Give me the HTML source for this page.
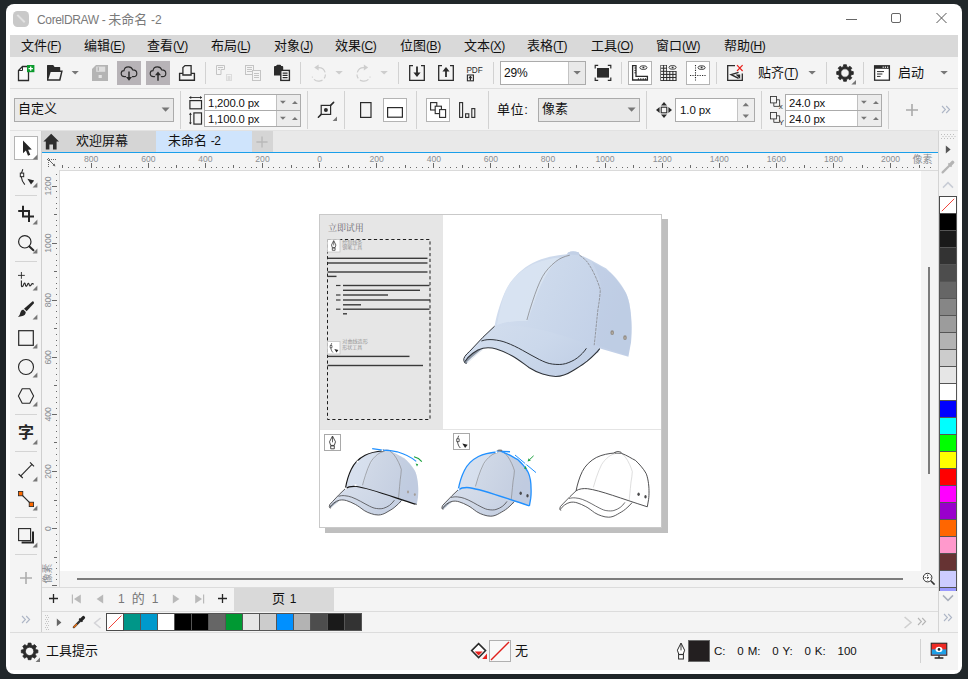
<!DOCTYPE html>
<html lang="zh-CN"><head><meta charset="utf-8"><title>CorelDRAW - 未命名 -2</title>
<style>
html,body{margin:0;padding:0;}
body{width:968px;height:679px;background:#21272a;overflow:hidden;position:relative;font-family:"Liberation Sans","Noto Sans CJK SC",sans-serif;font-size:13px;}
#app{position:absolute;left:0;top:0;width:968px;height:679px;background:#fff;clip-path:inset(4px 6px 5px 6px round 8px);}
#app div,#app span.t,#app svg{position:absolute;}
#app div{box-sizing:border-box;}
span.t{white-space:pre;}
u{text-decoration:underline;text-underline-offset:1.5px;text-decoration-thickness:1px;}
.lat{font-size:12px;letter-spacing:-0.45px;}
</style></head><body><div id="app">

<svg style="left:13px;top:11px;" width="16" height="16" viewBox="0 0 16 16"><rect x="0" y="0" width="16" height="16" rx="4.5" fill="#c9c9c9"/><path d="M3.6 4.6 L5 3.2 L12.4 10.6 L11 12 Z" fill="#e2e2e2"/></svg>
<span class="t" style="left:37px;top:11.5px;font-size:13px;line-height:16px;color:#7a7a7a;"><span style="font-size:12px;letter-spacing:-0.35px">CorelDRAW - </span>未命名 <span style="font-size:12px">-2</span></span>
<svg style="left:840px;top:8px;" width="116" height="22" viewBox="0 0 116 22"><path d="M6 11.5 H17" stroke="#666" stroke-width="1" fill="none"/><rect x="51.5" y="5.5" width="9" height="9" rx="1.5" fill="none" stroke="#666" stroke-width="1"/><path d="M96.5 5 L106.5 15 M106.5 5 L96.5 15" stroke="#555" stroke-width="1" fill="none"/></svg>
<div style="left:10px;top:35px;width:948px;height:22px;background:#d9d9d9;"></div>
<span class="t" style="left:21px;top:38px;font-size:13px;line-height:16px;color:#111;">文件<span class="lat">(<u>F</u>)</span></span>
<span class="t" style="left:84px;top:38px;font-size:13px;line-height:16px;color:#111;">编辑<span class="lat">(<u>E</u>)</span></span>
<span class="t" style="left:147px;top:38px;font-size:13px;line-height:16px;color:#111;">查看<span class="lat">(<u>V</u>)</span></span>
<span class="t" style="left:211px;top:38px;font-size:13px;line-height:16px;color:#111;">布局<span class="lat">(<u>L</u>)</span></span>
<span class="t" style="left:274px;top:38px;font-size:13px;line-height:16px;color:#111;">对象<span class="lat">(<u>J</u>)</span></span>
<span class="t" style="left:335px;top:38px;font-size:13px;line-height:16px;color:#111;">效果<span class="lat">(<u>C</u>)</span></span>
<span class="t" style="left:400px;top:38px;font-size:13px;line-height:16px;color:#111;">位图<span class="lat">(<u>B</u>)</span></span>
<span class="t" style="left:464px;top:38px;font-size:13px;line-height:16px;color:#111;">文本<span class="lat">(<u>X</u>)</span></span>
<span class="t" style="left:527px;top:38px;font-size:13px;line-height:16px;color:#111;">表格<span class="lat">(<u>T</u>)</span></span>
<span class="t" style="left:591px;top:38px;font-size:13px;line-height:16px;color:#111;">工具<span class="lat">(<u>O</u>)</span></span>
<span class="t" style="left:656px;top:38px;font-size:13px;line-height:16px;color:#111;">窗口<span class="lat">(<u>W</u>)</span></span>
<span class="t" style="left:724px;top:38px;font-size:13px;line-height:16px;color:#111;">帮助<span class="lat">(<u>H</u>)</span></span>
<div style="left:10px;top:57px;width:948px;height:31px;background:#f4f4f4;"></div>
<div style="left:10px;top:88px;width:948px;height:1px;background:#dedede;"></div>
<div style="left:10px;top:89px;width:948px;height:42px;background:#f4f4f4;"></div>
<div style="left:10px;top:130px;width:948px;height:1px;background:#e2e2e2;"></div>
<div style="left:205px;top:62px;width:1px;height:22px;background:#d2d2d2;"></div>
<div style="left:300px;top:62px;width:1px;height:22px;background:#d2d2d2;"></div>
<div style="left:398px;top:62px;width:1px;height:22px;background:#d2d2d2;"></div>
<div style="left:493px;top:62px;width:1px;height:22px;background:#d2d2d2;"></div>
<div style="left:621px;top:62px;width:1px;height:22px;background:#d2d2d2;"></div>
<div style="left:716px;top:62px;width:1px;height:22px;background:#d2d2d2;"></div>
<div style="left:826px;top:62px;width:1px;height:22px;background:#d2d2d2;"></div>
<div style="left:863px;top:62px;width:1px;height:22px;background:#d2d2d2;"></div>
<svg style="left:16px;top:63px;" width="20" height="20" viewBox="0 0 20 20"><path d="M2.5 17.5 V7.5 L6.5 3.5 H12.5 V17.5 Z" fill="#fafafa" stroke="#2b2b2b" stroke-width="1.3" stroke-linejoin="miter"/><path d="M6.5 3.5 V7.5 H2.5" fill="none" stroke="#2b2b2b" stroke-width="1"/><rect x="11" y="2" width="7.4" height="7.2" fill="#0a9a2c"/><path d="M14.7 3.4 V7.8 M12.5 5.6 H16.9" stroke="#fff" stroke-width="1.3"/></svg>
<svg style="left:45px;top:63px;" width="20" height="20" viewBox="0 0 20 20"><path d="M2 17.8 V2.6 Q2 2 2.6 2 H8.2 L9.6 4 H14.6 Q15.2 4 15.2 4.6 V7.4 H17.8 L15.4 17.8 Z" fill="#2b2b2b"/><path d="M3.4 16.3 L5.7 8.9 H16 L14.2 16.3 Z" fill="#f4f4f4"/></svg>
<svg style="left:71px;top:70px;" width="9" height="6" viewBox="0 0 9 6"><path d="M0.6 0.9 H7.8 L4.2 4.6 Z" fill="#777"/></svg>
<svg style="left:91px;top:64px;" width="18" height="18" viewBox="0 0 18 18"><path d="M1 5 L5 1 H17 V17 H1 Z" fill="#b4b4b4"/><rect x="5.2" y="2.6" width="9" height="5.2" fill="#dedede"/><rect x="6.6" y="3.2" width="1.4" height="3.6" fill="#b4b4b4"/><rect x="7.6" y="11" width="3.2" height="3" fill="#e4e4e4"/></svg>
<div style="left:117px;top:61px;width:24px;height:24px;background:#b7b3b7;"></div>
<div style="left:146px;top:61px;width:24px;height:24px;background:#b7b3b7;"></div>
<svg style="left:118px;top:62px;" width="22" height="22" viewBox="0 0 22 22"><path d="M7.6 14.6 H6.6 C4.4 14.6 3.2 13 3.2 11.5 C3.2 9.8 4.5 8.6 6 8.6 C6.3 6.2 8.2 4.8 10.4 4.8 C12.5 4.8 14.1 6 14.7 7.8 C16.9 7.8 18.8 9.2 18.8 11.4 C18.8 13.3 17.3 14.6 15.5 14.6 H14.4" fill="none" stroke="#2b2b2b" stroke-width="1.15" stroke-linecap="round"/><path d="M11 9.6 V16.4" stroke="#2b2b2b" stroke-width="1.5"/><path d="M8 15 H14 L11 18.8 Z" fill="#2b2b2b"/></svg>
<svg style="left:147px;top:62px;" width="22" height="22" viewBox="0 0 22 22"><path d="M7.6 14.6 H6.6 C4.4 14.6 3.2 13 3.2 11.5 C3.2 9.8 4.5 8.6 6 8.6 C6.3 6.2 8.2 4.8 10.4 4.8 C12.5 4.8 14.1 6 14.7 7.8 C16.9 7.8 18.8 9.2 18.8 11.4 C18.8 13.3 17.3 14.6 15.5 14.6 H14.4" fill="none" stroke="#2b2b2b" stroke-width="1.15" stroke-linecap="round"/><path d="M11 12 V18.8" stroke="#2b2b2b" stroke-width="1.5"/><path d="M8 13.2 H14 L11 9.4 Z" fill="#2b2b2b"/></svg>
<svg style="left:177px;top:63px;" width="20" height="20" viewBox="0 0 20 20"><path d="M5.9 12 V4.6 L8 2.6 H14.1 V12 Z" fill="none" stroke="#2b2b2b" stroke-width="1.3"/><path d="M5.9 10.4 H2.6 V17.2 H17.4 V10.4 H14.1" fill="none" stroke="#2b2b2b" stroke-width="1.4"/></svg>
<svg style="left:215px;top:64px;" width="18" height="18" viewBox="0 0 18 18"><path d="M1.5 10.5 V1.5 H9.5 V5.5 H6 V10.5 Z" fill="none" stroke="#c4c4c4" stroke-width="1"/><path d="M3 3.5 H8 M3 5.5 H5" stroke="#c4c4c4" stroke-width="1"/><rect x="11.5" y="10.5" width="5" height="6" fill="none" stroke="#c4c4c4" stroke-width="1" stroke-dasharray="1 1"/><path d="M12.5 13 H15.5 M12.5 15 H15.5" stroke="#c4c4c4" stroke-width="1"/></svg>
<svg style="left:244px;top:64px;" width="18" height="18" viewBox="0 0 18 18"><rect x="1.5" y="1.5" width="8" height="9" fill="none" stroke="#c4c4c4" stroke-width="1"/><path d="M3 3.5 H8 M3 5.5 H8 M3 7.5 H8" stroke="#c4c4c4" stroke-width="1"/><rect x="8.5" y="6.5" width="8" height="10" fill="#f4f4f4" stroke="#c4c4c4" stroke-width="1"/><path d="M10 9.5 H15 M10 11.5 H15 M10 13.5 H15" stroke="#c4c4c4" stroke-width="1"/></svg>
<svg style="left:272px;top:63px;" width="20" height="20" viewBox="0 0 20 20"><path d="M2 4 Q2 3 3 3 H4.2 Q4.4 1.8 5.4 1.8 H8 Q9 1.8 9.2 3 H10.2 Q11.2 3 11.2 4 V12.4 H2 Z" fill="#2b2b2b"/><rect x="8.8" y="7.4" width="8.6" height="10" fill="#fff" stroke="#2b2b2b" stroke-width="1.4"/><path d="M10.6 10.2 H15.6 M10.6 12.4 H15.6 M10.6 14.6 H15.6" stroke="#2b2b2b" stroke-width="1.2"/></svg>
<svg style="left:308px;top:63px;" width="22" height="22" viewBox="0 0 22 22"><path d="M10 4.6 A6.8 6.8 0 1 1 4.2 13.6" fill="none" stroke="#cdcdcd" stroke-width="1.2" stroke-dasharray="9 2.2 4 2.2 9 2.2"/><path d="M10.6 1.6 V7.6 L6.2 4.6 Z" fill="#cdcdcd"/></svg>
<svg style="left:335px;top:70px;" width="9" height="6" viewBox="0 0 9 6"><path d="M0.4 0.9 H7.8 L4.1 4.6 Z" fill="#cdcdcd"/></svg>
<svg style="left:353px;top:63px;" width="22" height="22" viewBox="0 0 22 22"><path d="M11.4 4.6 A6.8 6.8 0 1 0 17.2 13.6" fill="none" stroke="#cdcdcd" stroke-width="1.2" stroke-dasharray="9 2.2 4 2.2 9 2.2"/><path d="M10.8 1.6 V7.6 L15.2 4.6 Z" fill="#cdcdcd"/></svg>
<svg style="left:380px;top:70px;" width="9" height="6" viewBox="0 0 9 6"><path d="M0.4 0.9 H7.8 L4.1 4.6 Z" fill="#cdcdcd"/></svg>
<svg style="left:408px;top:64px;" width="18" height="18" viewBox="0 0 18 18"><path d="M5 1.7 H1.7 V16.3 H16.3 V1.7 H13" fill="none" stroke="#2b2b2b" stroke-width="1.3"/><path d="M9 2.6 V10" stroke="#2b2b2b" stroke-width="1.8"/><path d="M5.4 8.6 H12.6 L9 13 Z" fill="#2b2b2b"/></svg>
<svg style="left:437px;top:64px;" width="18" height="18" viewBox="0 0 18 18"><path d="M5 1.7 H1.7 V16.3 H16.3 V1.7 H13" fill="none" stroke="#2b2b2b" stroke-width="1.3"/><path d="M9 6 V13" stroke="#2b2b2b" stroke-width="1.8"/><path d="M5.4 7.4 H12.6 L9 3 Z" fill="#2b2b2b"/></svg>
<svg style="left:466px;top:63px;" width="19" height="20" viewBox="0 0 19 20"><text x="0.4" y="9.6" font-family='"Liberation Sans",sans-serif' font-size="8.6" fill="#2b2b2b" textLength="16.4" lengthAdjust="spacingAndGlyphs">PDF</text><rect x="1.4" y="12" width="6" height="5.8" fill="none" stroke="#2b2b2b" stroke-width="1.1"/><path d="M4.4 17.5 V13.8" stroke="#2b2b2b" stroke-width="1.2"/><path d="M2.4 15.2 L4.4 12.6 L6.4 15.2 Z" fill="#2b2b2b"/></svg>
<div style="left:500px;top:61px;width:86px;height:24px;background:#fff;border:1px solid #ababab;"></div>
<div style="left:568px;top:62px;width:17px;height:22px;background:#e9e9e9;border-left:1px solid #c4c4c4;"></div>
<svg style="left:573px;top:70px;" width="9" height="6" viewBox="0 0 9 6"><path d="M0.4 0.9 H7.8 L4.1 4.6 Z" fill="#777"/></svg>
<span class="t" style="left:504px;top:65px;font-size:12px;line-height:16px;color:#111;letter-spacing:-0.2px;">29%</span>
<svg style="left:594px;top:64px;" width="18" height="18" viewBox="0 0 18 18"><rect x="3" y="4" width="12" height="9.6" fill="#2b2b2b"/><path d="M1.2 4.4 V1.4 H4.2 M13.8 1.4 H16.8 V4.4 M16.8 13.4 V16.4 H13.8 M4.2 16.4 H1.2 V13.4" fill="none" stroke="#2b2b2b" stroke-width="1.2"/></svg>
<div style="left:628px;top:61px;width:24px;height:24px;background:#fff;border:1px solid #b4b4b4;"></div>
<svg style="left:631px;top:64px;" width="18" height="18" viewBox="0 0 18 18"><path d="M1.6 1.6 V16 H16.4 V12.4 H5 V1.6 Z" fill="none" stroke="#2b2b2b" stroke-width="1.3"/><path d="M3.4 4 H5 M3.4 6.4 H5 M3.4 8.8 H5 M7.4 14.2 V16 M9.8 14.2 V16 M12.2 14.2 V16 M14.4 14.2 V16" stroke="#2b2b2b" stroke-width="1"/><ellipse cx="12.4" cy="3.6" rx="3.6" ry="1.9" fill="#f8f8f8" stroke="#333" stroke-width="0.9"/><circle cx="12.4" cy="3.6" r="1" fill="#333"/></svg>
<svg style="left:660px;top:64px;" width="18" height="18" viewBox="0 0 18 18"><path d="M0.4 1 H7 V6.9 H16.6 V17 H0.4 Z" fill="#2b2b2b"/><rect x="1.0" y="1.6" width="2.1" height="2.1" fill="#f4f4f4"/><rect x="1.0" y="4.7" width="2.1" height="2.1" fill="#f4f4f4"/><rect x="1.0" y="7.800000000000001" width="2.1" height="2.1" fill="#f4f4f4"/><rect x="1.0" y="10.9" width="2.1" height="2.1" fill="#f4f4f4"/><rect x="1.0" y="14.0" width="2.1" height="2.1" fill="#f4f4f4"/><rect x="4.1" y="1.6" width="2.1" height="2.1" fill="#f4f4f4"/><rect x="4.1" y="4.7" width="2.1" height="2.1" fill="#f4f4f4"/><rect x="4.1" y="7.800000000000001" width="2.1" height="2.1" fill="#f4f4f4"/><rect x="4.1" y="10.9" width="2.1" height="2.1" fill="#f4f4f4"/><rect x="4.1" y="14.0" width="2.1" height="2.1" fill="#f4f4f4"/><rect x="7.2" y="7.800000000000001" width="2.1" height="2.1" fill="#f4f4f4"/><rect x="7.2" y="10.9" width="2.1" height="2.1" fill="#f4f4f4"/><rect x="7.2" y="14.0" width="2.1" height="2.1" fill="#f4f4f4"/><rect x="10.3" y="7.800000000000001" width="2.1" height="2.1" fill="#f4f4f4"/><rect x="10.3" y="10.9" width="2.1" height="2.1" fill="#f4f4f4"/><rect x="10.3" y="14.0" width="2.1" height="2.1" fill="#f4f4f4"/><rect x="13.4" y="7.800000000000001" width="2.1" height="2.1" fill="#f4f4f4"/><rect x="13.4" y="10.9" width="2.1" height="2.1" fill="#f4f4f4"/><rect x="13.4" y="14.0" width="2.1" height="2.1" fill="#f4f4f4"/><ellipse cx="12.6" cy="3.4" rx="3.6" ry="1.9" fill="#f8f8f8" stroke="#333" stroke-width="0.9"/><circle cx="12.6" cy="3.4" r="1" fill="#333"/></svg>
<div style="left:686px;top:61px;width:24px;height:24px;background:#fff;border:1px solid #b4b4b4;"></div>
<svg style="left:689px;top:64px;" width="18" height="18" viewBox="0 0 18 18"><path d="M6.5 1 V17" stroke="#2b2b2b" stroke-width="1.1" stroke-dasharray="1.2 1.2"/><path d="M1 11.5 H17" stroke="#2b2b2b" stroke-width="1.1" stroke-dasharray="1.2 1.2"/><ellipse cx="12.6" cy="3.6" rx="3.6" ry="1.9" fill="#f8f8f8" stroke="#333" stroke-width="0.9"/><circle cx="12.6" cy="3.6" r="1" fill="#333"/></svg>
<svg style="left:726px;top:64px;" width="18" height="18" viewBox="0 0 18 18"><path d="M9 1.7 H1.7 V16.3 H16.3 V9.6" fill="none" stroke="#2b2b2b" stroke-width="1.3"/><path d="M12.6 8.4 L5.2 10.6 L12.6 14.4" fill="none" stroke="#2b2b2b" stroke-width="1.5"/><path d="M9.6 10.4 H14.2 V15 Z" fill="#2b2b2b"/><path d="M11 1.2 L16.6 7 M16.6 1.2 L11 7" stroke="#e8201c" stroke-width="1.2"/></svg>
<span class="t" style="left:758px;top:65px;font-size:13px;line-height:16px;color:#111;">贴齐<span class="lat">(<u>T</u>)</span></span>
<svg style="left:808px;top:70px;" width="9" height="6" viewBox="0 0 9 6"><path d="M0.4 0.9 H7.8 L4.1 4.6 Z" fill="#777"/></svg>
<svg style="left:835px;top:63px;" width="22" height="22" viewBox="0 0 22 22"><path d="M8.33 3.72 L8.58 1.72 L11.42 1.72 L11.67 3.72 L13.26 4.38 L14.85 3.14 L16.86 5.15 L15.62 6.74 L16.28 8.33 L18.28 8.58 L18.28 11.42 L16.28 11.67 L15.62 13.26 L16.86 14.85 L14.85 16.86 L13.26 15.62 L11.67 16.28 L11.42 18.28 L8.58 18.28 L8.33 16.28 L6.74 15.62 L5.15 16.86 L3.14 14.85 L4.38 13.26 L3.72 11.67 L1.72 11.42 L1.72 8.58 L3.72 8.33 L4.38 6.74 L3.14 5.15 L5.15 3.14 L6.74 4.38 Z M5.8 10 a4.2 4.2 0 1 0 8.4 0 a4.2 4.2 0 1 0 -8.4 0 Z" fill="#2b2b2b" fill-rule="evenodd" stroke="#2b2b2b" stroke-width="0.8" stroke-linejoin="round"/><path d="M21 17 V21.6 H16.4 Z" fill="#777"/></svg>
<svg style="left:873px;top:64px;" width="18" height="18" viewBox="0 0 18 18"><rect x="1.6" y="1.8" width="14.8" height="14.4" fill="#fff" stroke="#2b2b2b" stroke-width="1.3"/><rect x="1.6" y="1.8" width="14.8" height="3" fill="#2b2b2b"/><rect x="9.6" y="2.6" width="1.2" height="1.2" fill="#fff"/><rect x="11.8" y="2.6" width="1.2" height="1.2" fill="#fff"/><rect x="14" y="2.6" width="1.2" height="1.2" fill="#fff"/><path d="M4 7.6 H11 M4 10 H9.4 M4 12.4 H7.6" stroke="#2b2b2b" stroke-width="1"/></svg>
<span class="t" style="left:898px;top:65px;font-size:13px;line-height:16px;color:#111;">启动</span>
<svg style="left:940px;top:70px;" width="9" height="6" viewBox="0 0 9 6"><path d="M0.4 0.9 H7.8 L4.1 4.6 Z" fill="#777"/></svg>
<div style="left:180px;top:91px;width:1px;height:38px;background:#d2d2d2;"></div>
<div style="left:307px;top:91px;width:1px;height:38px;background:#d2d2d2;"></div>
<div style="left:344px;top:91px;width:1px;height:38px;background:#d2d2d2;"></div>
<div style="left:416px;top:91px;width:1px;height:38px;background:#d2d2d2;"></div>
<div style="left:488px;top:91px;width:1px;height:38px;background:#d2d2d2;"></div>
<div style="left:646px;top:91px;width:1px;height:38px;background:#d2d2d2;"></div>
<div style="left:761px;top:91px;width:1px;height:38px;background:#d2d2d2;"></div>
<div style="left:888px;top:91px;width:1px;height:38px;background:#d2d2d2;"></div>
<div style="left:14px;top:98px;width:160px;height:24px;background:#e9e9e9;border:1px solid #ababab;"></div>
<svg style="left:161px;top:107px;" width="10" height="6" viewBox="0 0 10 6"><path d="M0.6 0.6 H8.6 L4.6 4.8 Z" fill="#777"/></svg>
<span class="t" style="left:18px;top:101px;font-size:13px;line-height:16px;color:#111;">自定义</span>
<svg style="left:187px;top:94px;" width="17" height="33" viewBox="0 0 17 33"><path d="M2.6 3.5 H14.6" stroke="#2b2b2b" stroke-width="0.9"/><path d="M2 3.5 L4.2 2 V5 Z M15.2 3.5 L13 2 V5 Z" fill="#2b2b2b"/><rect x="2.9" y="6.6" width="11.6" height="8.2" fill="none" stroke="#2b2b2b" stroke-width="1.2"/><path d="M3.4 19.6 V29.6" stroke="#2b2b2b" stroke-width="0.9"/><path d="M3.4 18.6 L1.9 20.8 H4.9 Z M3.4 30.6 L1.9 28.4 H4.9 Z" fill="#2b2b2b"/><rect x="6.9" y="18.9" width="7.6" height="11.2" fill="none" stroke="#2b2b2b" stroke-width="1.2"/></svg>
<div style="left:204px;top:94px;width:97px;height:33px;background:#fff;border:1px solid #ababab;"></div>
<div style="left:204px;top:110px;width:97px;height:1px;background:#ababab;"></div>
<div style="left:276px;top:95px;width:24px;height:31px;background:#ececec;border-left:1px solid #c0c0c0;"></div>
<div style="left:276px;top:110px;width:24px;height:1px;background:#ababab;"></div>
<svg style="left:279px;top:100px;" width="8" height="5" viewBox="0 0 8 5"><path d="M1 0.8 H6.8 L3.9 3.8 Z" fill="#777"/></svg>
<svg style="left:291px;top:100px;" width="8" height="5" viewBox="0 0 8 5"><path d="M1 4 H6.8 L3.9 1 Z" fill="#777"/></svg>
<svg style="left:279px;top:116px;" width="8" height="5" viewBox="0 0 8 5"><path d="M1 0.8 H6.8 L3.9 3.8 Z" fill="#777"/></svg>
<svg style="left:291px;top:116px;" width="8" height="5" viewBox="0 0 8 5"><path d="M1 4 H6.8 L3.9 1 Z" fill="#777"/></svg>
<span class="t" style="left:208px;top:95px;font-size:11.3px;line-height:16px;color:#111;letter-spacing:-0.15px;">1,200.0 px</span>
<span class="t" style="left:208px;top:111px;font-size:11.3px;line-height:16px;color:#111;letter-spacing:-0.15px;">1,100.0 px</span>
<svg style="left:316px;top:99px;" width="24" height="24" viewBox="0 0 24 24"><rect x="5.2" y="6.4" width="9.4" height="9" fill="#f4f4f4" stroke="#2b2b2b" stroke-width="1.2"/><circle cx="9.9" cy="10.9" r="2" fill="#2b2b2b"/><path d="M2.4 18.2 L5.2 15.4 M14.6 6.4 L17.6 3.4" stroke="#2b2b2b" stroke-width="1.6" stroke-linecap="round"/><path d="M21 17.6 V22 H16.6 Z" fill="#777"/></svg>
<svg style="left:359px;top:101px;" width="14" height="18" viewBox="0 0 14 18"><rect x="1.6" y="1.6" width="10.4" height="14.8" fill="none" stroke="#2b2b2b" stroke-width="1.2"/></svg>
<div style="left:383px;top:98px;width:24px;height:24px;background:#fff;border:1px solid #b4b4b4;"></div>
<svg style="left:386px;top:106px;" width="18" height="13" viewBox="0 0 18 13"><rect x="1.6" y="1.6" width="14.8" height="9.6" fill="none" stroke="#2b2b2b" stroke-width="1.2"/></svg>
<div style="left:426px;top:98px;width:24px;height:24px;background:#fff;border:1px solid #b4b4b4;"></div>
<svg style="left:429px;top:101px;" width="18" height="18" viewBox="0 0 18 18"><rect x="1.6" y="1.6" width="6.2" height="7.4" fill="#fff" stroke="#2b2b2b" stroke-width="1.1"/><rect x="6.2" y="5.2" width="6.2" height="7.4" fill="#fff" stroke="#2b2b2b" stroke-width="1.1"/><rect x="10.6" y="8.6" width="6" height="7.8" fill="#fff" stroke="#2b2b2b" stroke-width="1.1"/></svg>
<svg style="left:458px;top:101px;" width="18" height="18" viewBox="0 0 18 18"><rect x="1.6" y="1.6" width="3" height="14.8" fill="none" stroke="#2b2b2b" stroke-width="1.1"/><rect x="7.6" y="12.8" width="3.2" height="3.6" fill="none" stroke="#2b2b2b" stroke-width="1.1"/><rect x="13.8" y="7.6" width="3" height="8.8" fill="none" stroke="#2b2b2b" stroke-width="1.1"/></svg>
<span class="t" style="left:497px;top:102px;font-size:13px;line-height:16px;color:#111;letter-spacing:0.6px;">单位:</span>
<div style="left:538px;top:98px;width:102px;height:24px;background:#e9e9e9;border:1px solid #ababab;"></div>
<svg style="left:627px;top:107px;" width="10" height="6" viewBox="0 0 10 6"><path d="M0.6 0.6 H8.6 L4.6 4.8 Z" fill="#777"/></svg>
<span class="t" style="left:542px;top:101px;font-size:13px;line-height:16px;color:#111;">像素</span>
<svg style="left:655px;top:101px;" width="18" height="18" viewBox="0 0 18 18"><rect x="6.2" y="6.2" width="5.6" height="5.6" fill="none" stroke="#2b2b2b" stroke-width="1.1"/><path d="M9 1 L12 4.6 H6 Z M9 17 L12 13.4 H6 Z M1 9 L4.6 6 V12 Z M17 9 L13.4 6 V12 Z" fill="#2b2b2b"/></svg>
<div style="left:675px;top:98px;width:80px;height:24px;background:#fff;border:1px solid #ababab;"></div>
<div style="left:737px;top:99px;width:17px;height:22px;background:#eee;border-left:1px solid #c4c4c4;"></div>
<svg style="left:742px;top:102px;" width="8" height="5" viewBox="0 0 8 5"><path d="M0.6 4.2 H7 L3.8 0.8 Z" fill="#777"/></svg>
<svg style="left:742px;top:114px;" width="8" height="5" viewBox="0 0 8 5"><path d="M0.6 0.6 H7 L3.8 4 Z" fill="#777"/></svg>
<span class="t" style="left:680px;top:102px;font-size:11.5px;line-height:16px;color:#111;letter-spacing:-0.1px;">1.0 px</span>
<svg style="left:769px;top:94px;" width="16" height="16" viewBox="0 0 16 16"><rect x="1.5" y="2.5" width="6" height="6.4" fill="none" stroke="#3a3a3a" stroke-width="0.9"/><path d="M7.5 5.8 H10.6 V12.4 H4.8 V8.9" fill="none" stroke="#3a3a3a" stroke-width="0.9"/><text x="9.8" y="15.2" font-family='"Liberation Sans",sans-serif' font-size="8" fill="#333">x</text></svg>
<svg style="left:769px;top:110px;" width="16" height="16" viewBox="0 0 16 16"><rect x="1.5" y="2.5" width="6" height="6.4" fill="none" stroke="#3a3a3a" stroke-width="0.9"/><path d="M7.5 5.8 H10.6 V12.4 H4.8 V8.9" fill="none" stroke="#3a3a3a" stroke-width="0.9"/><text x="9.8" y="15.2" font-family='"Liberation Sans",sans-serif' font-size="8" fill="#333">Y</text></svg>
<div style="left:785px;top:94px;width:97px;height:33px;background:#fff;border:1px solid #ababab;"></div>
<div style="left:785px;top:110px;width:97px;height:1px;background:#ababab;"></div>
<div style="left:857px;top:95px;width:24px;height:31px;background:#ececec;border-left:1px solid #c0c0c0;"></div>
<div style="left:857px;top:110px;width:24px;height:1px;background:#ababab;"></div>
<svg style="left:860px;top:100px;" width="8" height="5" viewBox="0 0 8 5"><path d="M1 0.8 H6.8 L3.9 3.8 Z" fill="#777"/></svg>
<svg style="left:872px;top:100px;" width="8" height="5" viewBox="0 0 8 5"><path d="M1 4 H6.8 L3.9 1 Z" fill="#777"/></svg>
<svg style="left:860px;top:116px;" width="8" height="5" viewBox="0 0 8 5"><path d="M1 0.8 H6.8 L3.9 3.8 Z" fill="#777"/></svg>
<svg style="left:872px;top:116px;" width="8" height="5" viewBox="0 0 8 5"><path d="M1 4 H6.8 L3.9 1 Z" fill="#777"/></svg>
<span class="t" style="left:789px;top:95px;font-size:11.3px;line-height:16px;color:#111;letter-spacing:-0.15px;">24.0 px</span>
<span class="t" style="left:789px;top:111px;font-size:11.3px;line-height:16px;color:#111;letter-spacing:-0.15px;">24.0 px</span>
<svg style="left:905px;top:103px;" width="14" height="14" viewBox="0 0 14 14"><path d="M7 1 V13 M1 7 H13" stroke="#a9a9a9" stroke-width="1.6"/></svg>
<svg style="left:941px;top:105px;" width="10" height="9" viewBox="0 0 10 9"><path d="M1 1 L4.4 4.5 L1 8 M5.2 1 L8.6 4.5 L5.2 8" fill="none" stroke="#aeb6c6" stroke-width="1.1"/></svg>
<div style="left:10px;top:131px;width:31px;height:502px;background:#f4f4f4;"></div>
<div style="left:41px;top:131px;width:1px;height:502px;background:#cfcfcf;"></div>
<div style="left:14px;top:136px;width:24px;height:24px;background:#fff;border:1px solid #b4b4b4;"></div>
<svg style="left:20px;top:139px;" width="14" height="19" viewBox="0 0 14 19"><path d="M3 1.4 V14.2 L5.9 11.5 L8 16.8 L10.3 15.8 L8.1 10.8 L11.8 10.6 Z" fill="#262626"/></svg>
<svg style="left:32px;top:154px;" width="6" height="6" viewBox="0 0 6 6"><path d="M5.4 0.6 V5.4 H0.6 Z" fill="#777"/></svg>
<svg style="left:17px;top:167px;" width="20" height="22" viewBox="0 0 20 22"><path d="M5.8 2.2 C3.6 7 3.8 13 7.8 17.6" fill="none" stroke="#262626" stroke-width="1.1"/><rect x="3.3" y="6.1" width="3.4" height="3.6" fill="#f4f4f4" stroke="#262626" stroke-width="1"/><path d="M10.4 11.8 L17.2 13.6 L14 17.4 Z" fill="#262626"/></svg>
<svg style="left:32px;top:182px;" width="6" height="6" viewBox="0 0 6 6"><path d="M5.4 0.6 V5.4 H0.6 Z" fill="#777"/></svg>
<div style="left:15px;top:195px;width:22px;height:1px;background:#d4d4d4;"></div>
<svg style="left:17px;top:205px;" width="18" height="18" viewBox="0 0 18 18"><path d="M1.2 6 H12 V11.4 M6 0.8 V11.4 H17 M12 11.4 V17" fill="none" stroke="#262626" stroke-width="2"/></svg>
<svg style="left:32px;top:219px;" width="6" height="6" viewBox="0 0 6 6"><path d="M5.4 0.6 V5.4 H0.6 Z" fill="#777"/></svg>
<svg style="left:17px;top:234px;" width="18" height="18" viewBox="0 0 18 18"><circle cx="7.8" cy="7.8" r="6.2" fill="none" stroke="#262626" stroke-width="1.2"/><path d="M12.4 12.4 L16.4 16.2" stroke="#262626" stroke-width="2" stroke-linecap="round"/></svg>
<svg style="left:32px;top:248px;" width="6" height="6" viewBox="0 0 6 6"><path d="M5.4 0.6 V5.4 H0.6 Z" fill="#777"/></svg>
<div style="left:15px;top:261px;width:22px;height:1px;background:#d4d4d4;"></div>
<svg style="left:17px;top:270px;" width="18" height="18" viewBox="0 0 18 18"><path d="M4.4 2 V8.8 M1 5.4 H7.8" stroke="#262626" stroke-width="0.9"/><path d="M4.4 10.6 V15.6 Q4.6 17.4 6 16 L7 13.6 Q7.6 12.6 8.2 13.8 L8.6 15.6 Q9 17 10 15.6 L10.8 13.8 Q11.4 12.8 12 14 L12.4 15.4 Q12.8 16.6 13.8 15.4 L14.6 14 Q15.4 13 16.6 14.4" fill="none" stroke="#262626" stroke-width="1.1" stroke-linejoin="round"/></svg>
<svg style="left:32px;top:285px;" width="6" height="6" viewBox="0 0 6 6"><path d="M5.4 0.6 V5.4 H0.6 Z" fill="#777"/></svg>
<svg style="left:17px;top:300px;" width="18" height="18" viewBox="0 0 18 18"><path d="M15.6 1.2 Q17.2 1.4 17 3.2 L9.6 11.2 L7 8.8 Z" fill="#262626"/><path d="M6.2 9.6 L8.8 12 Q8.6 15.4 5.4 16 Q3 16.4 1 17 Q3.2 14.4 3.4 12.4 Q3.8 10 6.2 9.6 Z" fill="#262626"/></svg>
<svg style="left:32px;top:314px;" width="6" height="6" viewBox="0 0 6 6"><path d="M5.4 0.6 V5.4 H0.6 Z" fill="#777"/></svg>
<svg style="left:17px;top:329px;" width="18" height="18" viewBox="0 0 18 18"><rect x="1.7" y="1.7" width="14.6" height="14.6" fill="none" stroke="#262626" stroke-width="1.2"/></svg>
<svg style="left:32px;top:343px;" width="6" height="6" viewBox="0 0 6 6"><path d="M5.4 0.6 V5.4 H0.6 Z" fill="#777"/></svg>
<svg style="left:17px;top:358px;" width="18" height="18" viewBox="0 0 18 18"><circle cx="9" cy="9" r="7.5" fill="none" stroke="#262626" stroke-width="1.1"/></svg>
<svg style="left:32px;top:372px;" width="6" height="6" viewBox="0 0 6 6"><path d="M5.4 0.6 V5.4 H0.6 Z" fill="#777"/></svg>
<svg style="left:17px;top:387px;" width="18" height="18" viewBox="0 0 18 18"><path d="M1.4 9 L5.2 1.7 H12.8 L16.6 9 L12.8 16.3 H5.2 Z" fill="none" stroke="#262626" stroke-width="1.1"/></svg>
<svg style="left:32px;top:401px;" width="6" height="6" viewBox="0 0 6 6"><path d="M5.4 0.6 V5.4 H0.6 Z" fill="#777"/></svg>
<div style="left:15px;top:414px;width:22px;height:1px;background:#d4d4d4;"></div>
<span class="t" style="left:18px;top:423px;font-size:16px;line-height:20px;color:#262626;font-weight:700;">字</span>
<svg style="left:32px;top:439px;" width="6" height="6" viewBox="0 0 6 6"><path d="M5.4 0.6 V5.4 H0.6 Z" fill="#777"/></svg>
<div style="left:15px;top:451px;width:22px;height:1px;background:#d4d4d4;"></div>
<svg style="left:17px;top:461px;" width="18" height="18" viewBox="0 0 18 18"><path d="M3.6 15.2 L15 3.4" stroke="#262626" stroke-width="1.1"/><path d="M1.6 13 L5.8 17 M13 1.4 L17 5.4" stroke="#262626" stroke-width="1.1"/></svg>
<svg style="left:32px;top:476px;" width="6" height="6" viewBox="0 0 6 6"><path d="M5.4 0.6 V5.4 H0.6 Z" fill="#777"/></svg>
<svg style="left:17px;top:490px;" width="18" height="18" viewBox="0 0 18 18"><path d="M3.6 3.6 L14.4 14.4" stroke="#262626" stroke-width="1.2"/><rect x="1.4" y="1.4" width="4.4" height="4.4" fill="#ff6a00" stroke="#262626" stroke-width="0.8"/><rect x="12.2" y="12.2" width="4.4" height="4.4" fill="#ff6a00" stroke="#262626" stroke-width="0.8"/></svg>
<svg style="left:32px;top:505px;" width="6" height="6" viewBox="0 0 6 6"><path d="M5.4 0.6 V5.4 H0.6 Z" fill="#777"/></svg>
<div style="left:15px;top:517px;width:22px;height:1px;background:#d4d4d4;"></div>
<svg style="left:17px;top:527px;" width="18" height="18" viewBox="0 0 18 18"><path d="M4.6 15.4 H16 V4.4" fill="none" stroke="#262626" stroke-width="2"/><rect x="1.6" y="1.6" width="12" height="12" fill="#f4f4f4" stroke="#262626" stroke-width="1.1"/></svg>
<svg style="left:32px;top:542px;" width="6" height="6" viewBox="0 0 6 6"><path d="M5.4 0.6 V5.4 H0.6 Z" fill="#777"/></svg>
<div style="left:15px;top:554px;width:22px;height:1px;background:#d4d4d4;"></div>
<svg style="left:19px;top:571px;" width="14" height="14" viewBox="0 0 14 14"><path d="M7 1 V13 M1 7 H13" stroke="#adadad" stroke-width="1.6"/></svg>
<svg style="left:21px;top:615px;" width="10" height="9" viewBox="0 0 10 9"><path d="M1 1 L4.4 4.5 L1 8 M5.2 1 L8.6 4.5 L5.2 8" fill="none" stroke="#aeb6c6" stroke-width="1.1"/></svg>
<div style="left:42px;top:131px;width:896px;height:21px;background:#e9e9e9;"></div>
<div style="left:42px;top:131px;width:114px;height:21px;background:#d5d5d5;"></div>
<div style="left:156px;top:131px;width:96px;height:21px;background:#cfe4fc;"></div>
<div style="left:252px;top:131px;width:21px;height:21px;background:#d5d5d5;"></div>
<div style="left:42px;top:152px;width:896px;height:1px;background:#1a9fea;"></div>
<svg style="left:43px;top:133px;" width="17" height="18" viewBox="0 0 17 18"><path d="M8.2 0.8 L16 8.6 H13.6 V16.6 H10 V11.6 H6.4 V16.6 H2.8 V8.6 H0.4 Z" fill="#2e2e2e"/></svg>
<span class="t" style="left:76px;top:133px;font-size:13px;line-height:16px;color:#111;">欢迎屏幕</span>
<span class="t" style="left:168px;top:133px;font-size:13px;line-height:16px;color:#111;">未命名 <span class="lat">-2</span></span>
<svg style="left:255px;top:135px;" width="14" height="14" viewBox="0 0 14 14"><path d="M7 1.4 V12.6 M1.4 7 H12.6" stroke="#b9b9b9" stroke-width="1.4"/></svg>
<div style="left:42px;top:153px;width:896px;height:18px;background:#f4f4f4;"></div>
<div style="left:42px;top:171px;width:18px;height:416px;background:#f4f4f4;"></div>
<div style="left:60px;top:171px;width:861px;height:400px;background:#fff;"></div>
<div style="left:59px;top:170px;width:879px;height:1px;background:#dadada;"></div>
<div style="left:59px;top:170px;width:1px;height:417px;background:#dadada;"></div>
<div style="left:921px;top:171px;width:17px;height:416px;background:#f4f4f4;"></div>
<div style="left:60px;top:571px;width:878px;height:16px;background:#f4f4f4;"></div>
<svg style="left:42px;top:153px;" width="896" height="18" viewBox="0 0 896 18"><rect x="20" y="12" width="1" height="3" fill="#6a6a6a"/><rect x="26" y="14" width="1" height="1" fill="#6a6a6a"/><rect x="32" y="14" width="1" height="1" fill="#6a6a6a"/><rect x="37" y="14" width="1" height="1" fill="#6a6a6a"/><rect x="43" y="14" width="1" height="1" fill="#6a6a6a"/><rect x="49" y="10" width="1" height="5" fill="#6a6a6a"/><rect x="54" y="14" width="1" height="1" fill="#6a6a6a"/><rect x="60" y="14" width="1" height="1" fill="#6a6a6a"/><rect x="66" y="14" width="1" height="1" fill="#6a6a6a"/><rect x="72" y="14" width="1" height="1" fill="#6a6a6a"/><rect x="77" y="12" width="1" height="3" fill="#6a6a6a"/><rect x="83" y="14" width="1" height="1" fill="#6a6a6a"/><rect x="89" y="14" width="1" height="1" fill="#6a6a6a"/><rect x="94" y="14" width="1" height="1" fill="#6a6a6a"/><rect x="100" y="14" width="1" height="1" fill="#6a6a6a"/><rect x="106" y="10" width="1" height="5" fill="#6a6a6a"/><rect x="112" y="14" width="1" height="1" fill="#6a6a6a"/><rect x="117" y="14" width="1" height="1" fill="#6a6a6a"/><rect x="123" y="14" width="1" height="1" fill="#6a6a6a"/><rect x="129" y="14" width="1" height="1" fill="#6a6a6a"/><rect x="134" y="12" width="1" height="3" fill="#6a6a6a"/><rect x="140" y="14" width="1" height="1" fill="#6a6a6a"/><rect x="146" y="14" width="1" height="1" fill="#6a6a6a"/><rect x="151" y="14" width="1" height="1" fill="#6a6a6a"/><rect x="157" y="14" width="1" height="1" fill="#6a6a6a"/><rect x="163" y="10" width="1" height="5" fill="#6a6a6a"/><rect x="169" y="14" width="1" height="1" fill="#6a6a6a"/><rect x="174" y="14" width="1" height="1" fill="#6a6a6a"/><rect x="180" y="14" width="1" height="1" fill="#6a6a6a"/><rect x="186" y="14" width="1" height="1" fill="#6a6a6a"/><rect x="191" y="12" width="1" height="3" fill="#6a6a6a"/><rect x="197" y="14" width="1" height="1" fill="#6a6a6a"/><rect x="203" y="14" width="1" height="1" fill="#6a6a6a"/><rect x="209" y="14" width="1" height="1" fill="#6a6a6a"/><rect x="214" y="14" width="1" height="1" fill="#6a6a6a"/><rect x="220" y="10" width="1" height="5" fill="#6a6a6a"/><rect x="226" y="14" width="1" height="1" fill="#6a6a6a"/><rect x="231" y="14" width="1" height="1" fill="#6a6a6a"/><rect x="237" y="14" width="1" height="1" fill="#6a6a6a"/><rect x="243" y="14" width="1" height="1" fill="#6a6a6a"/><rect x="249" y="12" width="1" height="3" fill="#6a6a6a"/><rect x="254" y="14" width="1" height="1" fill="#6a6a6a"/><rect x="260" y="14" width="1" height="1" fill="#6a6a6a"/><rect x="266" y="14" width="1" height="1" fill="#6a6a6a"/><rect x="271" y="14" width="1" height="1" fill="#6a6a6a"/><rect x="277" y="10" width="1" height="5" fill="#6a6a6a"/><rect x="283" y="14" width="1" height="1" fill="#6a6a6a"/><rect x="289" y="14" width="1" height="1" fill="#6a6a6a"/><rect x="294" y="14" width="1" height="1" fill="#6a6a6a"/><rect x="300" y="14" width="1" height="1" fill="#6a6a6a"/><rect x="306" y="12" width="1" height="3" fill="#6a6a6a"/><rect x="311" y="14" width="1" height="1" fill="#6a6a6a"/><rect x="317" y="14" width="1" height="1" fill="#6a6a6a"/><rect x="323" y="14" width="1" height="1" fill="#6a6a6a"/><rect x="328" y="14" width="1" height="1" fill="#6a6a6a"/><rect x="334" y="10" width="1" height="5" fill="#6a6a6a"/><rect x="340" y="14" width="1" height="1" fill="#6a6a6a"/><rect x="346" y="14" width="1" height="1" fill="#6a6a6a"/><rect x="351" y="14" width="1" height="1" fill="#6a6a6a"/><rect x="357" y="14" width="1" height="1" fill="#6a6a6a"/><rect x="363" y="12" width="1" height="3" fill="#6a6a6a"/><rect x="368" y="14" width="1" height="1" fill="#6a6a6a"/><rect x="374" y="14" width="1" height="1" fill="#6a6a6a"/><rect x="380" y="14" width="1" height="1" fill="#6a6a6a"/><rect x="386" y="14" width="1" height="1" fill="#6a6a6a"/><rect x="391" y="10" width="1" height="5" fill="#6a6a6a"/><rect x="397" y="14" width="1" height="1" fill="#6a6a6a"/><rect x="403" y="14" width="1" height="1" fill="#6a6a6a"/><rect x="408" y="14" width="1" height="1" fill="#6a6a6a"/><rect x="414" y="14" width="1" height="1" fill="#6a6a6a"/><rect x="420" y="12" width="1" height="3" fill="#6a6a6a"/><rect x="426" y="14" width="1" height="1" fill="#6a6a6a"/><rect x="431" y="14" width="1" height="1" fill="#6a6a6a"/><rect x="437" y="14" width="1" height="1" fill="#6a6a6a"/><rect x="443" y="14" width="1" height="1" fill="#6a6a6a"/><rect x="448" y="10" width="1" height="5" fill="#6a6a6a"/><rect x="454" y="14" width="1" height="1" fill="#6a6a6a"/><rect x="460" y="14" width="1" height="1" fill="#6a6a6a"/><rect x="466" y="14" width="1" height="1" fill="#6a6a6a"/><rect x="471" y="14" width="1" height="1" fill="#6a6a6a"/><rect x="477" y="12" width="1" height="3" fill="#6a6a6a"/><rect x="483" y="14" width="1" height="1" fill="#6a6a6a"/><rect x="488" y="14" width="1" height="1" fill="#6a6a6a"/><rect x="494" y="14" width="1" height="1" fill="#6a6a6a"/><rect x="500" y="14" width="1" height="1" fill="#6a6a6a"/><rect x="506" y="10" width="1" height="5" fill="#6a6a6a"/><rect x="511" y="14" width="1" height="1" fill="#6a6a6a"/><rect x="517" y="14" width="1" height="1" fill="#6a6a6a"/><rect x="523" y="14" width="1" height="1" fill="#6a6a6a"/><rect x="528" y="14" width="1" height="1" fill="#6a6a6a"/><rect x="534" y="12" width="1" height="3" fill="#6a6a6a"/><rect x="540" y="14" width="1" height="1" fill="#6a6a6a"/><rect x="545" y="14" width="1" height="1" fill="#6a6a6a"/><rect x="551" y="14" width="1" height="1" fill="#6a6a6a"/><rect x="557" y="14" width="1" height="1" fill="#6a6a6a"/><rect x="563" y="10" width="1" height="5" fill="#6a6a6a"/><rect x="568" y="14" width="1" height="1" fill="#6a6a6a"/><rect x="574" y="14" width="1" height="1" fill="#6a6a6a"/><rect x="580" y="14" width="1" height="1" fill="#6a6a6a"/><rect x="585" y="14" width="1" height="1" fill="#6a6a6a"/><rect x="591" y="12" width="1" height="3" fill="#6a6a6a"/><rect x="597" y="14" width="1" height="1" fill="#6a6a6a"/><rect x="603" y="14" width="1" height="1" fill="#6a6a6a"/><rect x="608" y="14" width="1" height="1" fill="#6a6a6a"/><rect x="614" y="14" width="1" height="1" fill="#6a6a6a"/><rect x="620" y="10" width="1" height="5" fill="#6a6a6a"/><rect x="625" y="14" width="1" height="1" fill="#6a6a6a"/><rect x="631" y="14" width="1" height="1" fill="#6a6a6a"/><rect x="637" y="14" width="1" height="1" fill="#6a6a6a"/><rect x="643" y="14" width="1" height="1" fill="#6a6a6a"/><rect x="648" y="12" width="1" height="3" fill="#6a6a6a"/><rect x="654" y="14" width="1" height="1" fill="#6a6a6a"/><rect x="660" y="14" width="1" height="1" fill="#6a6a6a"/><rect x="665" y="14" width="1" height="1" fill="#6a6a6a"/><rect x="671" y="14" width="1" height="1" fill="#6a6a6a"/><rect x="677" y="10" width="1" height="5" fill="#6a6a6a"/><rect x="683" y="14" width="1" height="1" fill="#6a6a6a"/><rect x="688" y="14" width="1" height="1" fill="#6a6a6a"/><rect x="694" y="14" width="1" height="1" fill="#6a6a6a"/><rect x="700" y="14" width="1" height="1" fill="#6a6a6a"/><rect x="705" y="12" width="1" height="3" fill="#6a6a6a"/><rect x="711" y="14" width="1" height="1" fill="#6a6a6a"/><rect x="717" y="14" width="1" height="1" fill="#6a6a6a"/><rect x="722" y="14" width="1" height="1" fill="#6a6a6a"/><rect x="728" y="14" width="1" height="1" fill="#6a6a6a"/><rect x="734" y="10" width="1" height="5" fill="#6a6a6a"/><rect x="740" y="14" width="1" height="1" fill="#6a6a6a"/><rect x="745" y="14" width="1" height="1" fill="#6a6a6a"/><rect x="751" y="14" width="1" height="1" fill="#6a6a6a"/><rect x="757" y="14" width="1" height="1" fill="#6a6a6a"/><rect x="762" y="12" width="1" height="3" fill="#6a6a6a"/><rect x="768" y="14" width="1" height="1" fill="#6a6a6a"/><rect x="774" y="14" width="1" height="1" fill="#6a6a6a"/><rect x="780" y="14" width="1" height="1" fill="#6a6a6a"/><rect x="785" y="14" width="1" height="1" fill="#6a6a6a"/><rect x="791" y="10" width="1" height="5" fill="#6a6a6a"/><rect x="797" y="14" width="1" height="1" fill="#6a6a6a"/><rect x="802" y="14" width="1" height="1" fill="#6a6a6a"/><rect x="808" y="14" width="1" height="1" fill="#6a6a6a"/><rect x="814" y="14" width="1" height="1" fill="#6a6a6a"/><rect x="820" y="12" width="1" height="3" fill="#6a6a6a"/><rect x="825" y="14" width="1" height="1" fill="#6a6a6a"/><rect x="831" y="14" width="1" height="1" fill="#6a6a6a"/><rect x="837" y="14" width="1" height="1" fill="#6a6a6a"/><rect x="842" y="14" width="1" height="1" fill="#6a6a6a"/><rect x="848" y="10" width="1" height="5" fill="#6a6a6a"/><rect x="854" y="14" width="1" height="1" fill="#6a6a6a"/><rect x="860" y="14" width="1" height="1" fill="#6a6a6a"/><rect x="865" y="14" width="1" height="1" fill="#6a6a6a"/><rect x="871" y="14" width="1" height="1" fill="#6a6a6a"/><rect x="877" y="12" width="1" height="3" fill="#6a6a6a"/><rect x="882" y="14" width="1" height="1" fill="#6a6a6a"/><rect x="888" y="14" width="1" height="1" fill="#6a6a6a"/><text x="49.2" y="8.8" text-anchor="middle" font-family='"Liberation Sans",sans-serif' font-size="8.6" fill="#8a8d92">800</text><text x="106.3" y="8.8" text-anchor="middle" font-family='"Liberation Sans",sans-serif' font-size="8.6" fill="#8a8d92">600</text><text x="163.4" y="8.8" text-anchor="middle" font-family='"Liberation Sans",sans-serif' font-size="8.6" fill="#8a8d92">400</text><text x="220.5" y="8.8" text-anchor="middle" font-family='"Liberation Sans",sans-serif' font-size="8.6" fill="#8a8d92">200</text><text x="277.6" y="8.8" text-anchor="middle" font-family='"Liberation Sans",sans-serif' font-size="8.6" fill="#8a8d92">0</text><text x="334.7" y="8.8" text-anchor="middle" font-family='"Liberation Sans",sans-serif' font-size="8.6" fill="#8a8d92">200</text><text x="391.8" y="8.8" text-anchor="middle" font-family='"Liberation Sans",sans-serif' font-size="8.6" fill="#8a8d92">400</text><text x="448.9" y="8.8" text-anchor="middle" font-family='"Liberation Sans",sans-serif' font-size="8.6" fill="#8a8d92">600</text><text x="506.0" y="8.8" text-anchor="middle" font-family='"Liberation Sans",sans-serif' font-size="8.6" fill="#8a8d92">800</text><text x="563.1" y="8.8" text-anchor="middle" font-family='"Liberation Sans",sans-serif' font-size="8.6" fill="#8a8d92">1000</text><text x="620.2" y="8.8" text-anchor="middle" font-family='"Liberation Sans",sans-serif' font-size="8.6" fill="#8a8d92">1200</text><text x="677.3" y="8.8" text-anchor="middle" font-family='"Liberation Sans",sans-serif' font-size="8.6" fill="#8a8d92">1400</text><text x="734.4" y="8.8" text-anchor="middle" font-family='"Liberation Sans",sans-serif' font-size="8.6" fill="#8a8d92">1600</text><text x="791.5" y="8.8" text-anchor="middle" font-family='"Liberation Sans",sans-serif' font-size="8.6" fill="#8a8d92">1800</text><text x="848.6" y="8.8" text-anchor="middle" font-family='"Liberation Sans",sans-serif' font-size="8.6" fill="#8a8d92">2000</text><text x="880.5" y="9.6" text-anchor="middle" font-family='"Noto Sans CJK SC",sans-serif' font-size="10" fill="#8a8d92">像素</text><path d="M5 6.5 H14 M6.5 5 V14" stroke="#666" stroke-width="1" stroke-dasharray="1 1"/><path d="M7 7 L12.6 12.6" stroke="#666" stroke-width="1"/><path d="M13.4 13.4 L10.6 12.6 L12.6 10.6 Z" fill="#666"/></svg>
<svg style="left:42px;top:171px;" width="18" height="416" viewBox="0 0 18 416"><rect x="10" y="414" width="5" height="1" fill="#6a6a6a"/><rect x="14" y="408" width="1" height="1" fill="#6a6a6a"/><rect x="14" y="403" width="1" height="1" fill="#6a6a6a"/><rect x="14" y="397" width="1" height="1" fill="#6a6a6a"/><rect x="14" y="391" width="1" height="1" fill="#6a6a6a"/><rect x="12" y="386" width="3" height="1" fill="#6a6a6a"/><rect x="14" y="380" width="1" height="1" fill="#6a6a6a"/><rect x="14" y="374" width="1" height="1" fill="#6a6a6a"/><rect x="14" y="369" width="1" height="1" fill="#6a6a6a"/><rect x="14" y="363" width="1" height="1" fill="#6a6a6a"/><rect x="10" y="357" width="5" height="1" fill="#6a6a6a"/><rect x="14" y="351" width="1" height="1" fill="#6a6a6a"/><rect x="14" y="346" width="1" height="1" fill="#6a6a6a"/><rect x="14" y="340" width="1" height="1" fill="#6a6a6a"/><rect x="14" y="334" width="1" height="1" fill="#6a6a6a"/><rect x="12" y="329" width="3" height="1" fill="#6a6a6a"/><rect x="14" y="323" width="1" height="1" fill="#6a6a6a"/><rect x="14" y="317" width="1" height="1" fill="#6a6a6a"/><rect x="14" y="311" width="1" height="1" fill="#6a6a6a"/><rect x="14" y="306" width="1" height="1" fill="#6a6a6a"/><rect x="10" y="300" width="5" height="1" fill="#6a6a6a"/><rect x="14" y="294" width="1" height="1" fill="#6a6a6a"/><rect x="14" y="289" width="1" height="1" fill="#6a6a6a"/><rect x="14" y="283" width="1" height="1" fill="#6a6a6a"/><rect x="14" y="277" width="1" height="1" fill="#6a6a6a"/><rect x="12" y="271" width="3" height="1" fill="#6a6a6a"/><rect x="14" y="266" width="1" height="1" fill="#6a6a6a"/><rect x="14" y="260" width="1" height="1" fill="#6a6a6a"/><rect x="14" y="254" width="1" height="1" fill="#6a6a6a"/><rect x="14" y="249" width="1" height="1" fill="#6a6a6a"/><rect x="10" y="243" width="5" height="1" fill="#6a6a6a"/><rect x="14" y="237" width="1" height="1" fill="#6a6a6a"/><rect x="14" y="231" width="1" height="1" fill="#6a6a6a"/><rect x="14" y="226" width="1" height="1" fill="#6a6a6a"/><rect x="14" y="220" width="1" height="1" fill="#6a6a6a"/><rect x="12" y="214" width="3" height="1" fill="#6a6a6a"/><rect x="14" y="209" width="1" height="1" fill="#6a6a6a"/><rect x="14" y="203" width="1" height="1" fill="#6a6a6a"/><rect x="14" y="197" width="1" height="1" fill="#6a6a6a"/><rect x="14" y="192" width="1" height="1" fill="#6a6a6a"/><rect x="10" y="186" width="5" height="1" fill="#6a6a6a"/><rect x="14" y="180" width="1" height="1" fill="#6a6a6a"/><rect x="14" y="174" width="1" height="1" fill="#6a6a6a"/><rect x="14" y="169" width="1" height="1" fill="#6a6a6a"/><rect x="14" y="163" width="1" height="1" fill="#6a6a6a"/><rect x="12" y="157" width="3" height="1" fill="#6a6a6a"/><rect x="14" y="152" width="1" height="1" fill="#6a6a6a"/><rect x="14" y="146" width="1" height="1" fill="#6a6a6a"/><rect x="14" y="140" width="1" height="1" fill="#6a6a6a"/><rect x="14" y="134" width="1" height="1" fill="#6a6a6a"/><rect x="10" y="129" width="5" height="1" fill="#6a6a6a"/><rect x="14" y="123" width="1" height="1" fill="#6a6a6a"/><rect x="14" y="117" width="1" height="1" fill="#6a6a6a"/><rect x="14" y="112" width="1" height="1" fill="#6a6a6a"/><rect x="14" y="106" width="1" height="1" fill="#6a6a6a"/><rect x="12" y="100" width="3" height="1" fill="#6a6a6a"/><rect x="14" y="94" width="1" height="1" fill="#6a6a6a"/><rect x="14" y="89" width="1" height="1" fill="#6a6a6a"/><rect x="14" y="83" width="1" height="1" fill="#6a6a6a"/><rect x="14" y="77" width="1" height="1" fill="#6a6a6a"/><rect x="10" y="72" width="5" height="1" fill="#6a6a6a"/><rect x="14" y="66" width="1" height="1" fill="#6a6a6a"/><rect x="14" y="60" width="1" height="1" fill="#6a6a6a"/><rect x="14" y="54" width="1" height="1" fill="#6a6a6a"/><rect x="14" y="49" width="1" height="1" fill="#6a6a6a"/><rect x="12" y="43" width="3" height="1" fill="#6a6a6a"/><rect x="14" y="37" width="1" height="1" fill="#6a6a6a"/><rect x="14" y="32" width="1" height="1" fill="#6a6a6a"/><rect x="14" y="26" width="1" height="1" fill="#6a6a6a"/><rect x="14" y="20" width="1" height="1" fill="#6a6a6a"/><rect x="10" y="15" width="5" height="1" fill="#6a6a6a"/><rect x="14" y="9" width="1" height="1" fill="#6a6a6a"/><rect x="14" y="3" width="1" height="1" fill="#6a6a6a"/><text transform="translate(8.8 15.0) rotate(-90)" text-anchor="middle" font-family='"Liberation Sans",sans-serif' font-size="8.6" fill="#8a8d92">1200</text><text transform="translate(8.8 72.1) rotate(-90)" text-anchor="middle" font-family='"Liberation Sans",sans-serif' font-size="8.6" fill="#8a8d92">1000</text><text transform="translate(8.8 129.2) rotate(-90)" text-anchor="middle" font-family='"Liberation Sans",sans-serif' font-size="8.6" fill="#8a8d92">800</text><text transform="translate(8.8 186.3) rotate(-90)" text-anchor="middle" font-family='"Liberation Sans",sans-serif' font-size="8.6" fill="#8a8d92">600</text><text transform="translate(8.8 243.4) rotate(-90)" text-anchor="middle" font-family='"Liberation Sans",sans-serif' font-size="8.6" fill="#8a8d92">400</text><text transform="translate(8.8 300.5) rotate(-90)" text-anchor="middle" font-family='"Liberation Sans",sans-serif' font-size="8.6" fill="#8a8d92">200</text><text transform="translate(8.8 357.6) rotate(-90)" text-anchor="middle" font-family='"Liberation Sans",sans-serif' font-size="8.6" fill="#8a8d92">0</text><text transform="translate(9.4 402.5) rotate(-90)" text-anchor="middle" font-family='"Noto Sans CJK SC",sans-serif' font-size="10" fill="#8a8d92">像素</text></svg>
<div style="left:77px;top:578px;width:826px;height:2px;background:#7c7c7c;"></div>
<div style="left:928px;top:267px;width:2px;height:207px;background:#7c7c7c;"></div>
<svg style="left:922px;top:572px;" width="14" height="14" viewBox="0 0 14 14"><circle cx="5.6" cy="5.6" r="4.3" fill="#fff" stroke="#333" stroke-width="1"/><path d="M8.8 8.8 L12.6 12.6" stroke="#333" stroke-width="1.6"/><path d="M5.6 2.6 V8.6 M2.6 5.6 H8.6" stroke="#333" stroke-width="0.9" stroke-dasharray="1.6 1.2"/></svg>
<div style="left:938px;top:131px;width:20px;height:502px;background:#f4f4f4;"></div>
<div style="left:938px;top:131px;width:1px;height:502px;background:#d4d4d4;"></div>
<svg style="left:940px;top:133px;" width="16" height="7" viewBox="0 0 16 7"><rect x="1.0" y="1" width="1" height="1" fill="#bdbdbd"/><rect x="4.0" y="1" width="1" height="1" fill="#bdbdbd"/><rect x="7.0" y="1" width="1" height="1" fill="#bdbdbd"/><rect x="10.0" y="1" width="1" height="1" fill="#bdbdbd"/><rect x="13.0" y="1" width="1" height="1" fill="#bdbdbd"/><rect x="2.5" y="3" width="1" height="1" fill="#bdbdbd"/><rect x="5.5" y="3" width="1" height="1" fill="#bdbdbd"/><rect x="8.5" y="3" width="1" height="1" fill="#bdbdbd"/><rect x="11.5" y="3" width="1" height="1" fill="#bdbdbd"/><rect x="14.5" y="3" width="1" height="1" fill="#bdbdbd"/><rect x="1.0" y="5" width="1" height="1" fill="#bdbdbd"/><rect x="4.0" y="5" width="1" height="1" fill="#bdbdbd"/><rect x="7.0" y="5" width="1" height="1" fill="#bdbdbd"/><rect x="10.0" y="5" width="1" height="1" fill="#bdbdbd"/><rect x="13.0" y="5" width="1" height="1" fill="#bdbdbd"/></svg>
<svg style="left:945px;top:144px;" width="7" height="11" viewBox="0 0 7 11"><path d="M0.8 1.4 L5.6 5.4 L0.8 9.4 Z" fill="#555"/></svg>
<svg style="left:941px;top:160px;" width="14" height="14" viewBox="0 0 14 14"><path d="M1.6 12.4 L8.8 5.2" stroke="#b4b4b4" stroke-width="2.2" stroke-linecap="round"/><path d="M7.4 3.4 L10.6 6.6" stroke="#b4b4b4" stroke-width="1.6"/><path d="M9.4 4.6 L11.6 2.4" stroke="#b4b4b4" stroke-width="3.4" stroke-linecap="round"/></svg>
<svg style="left:942px;top:181px;" width="12" height="8" viewBox="0 0 12 8"><path d="M1 6.6 L6 1.6 L11 6.6" fill="none" stroke="#c9cdd6" stroke-width="1.5"/></svg>
<div style="left:939px;top:196px;width:18px;height:395px;background:#555;"></div>
<div style="left:939px;top:196px;width:18px;height:18px;background:#fff;border:1px solid #4a4a4a;"></div>
<svg style="left:940px;top:197px;" width="16" height="16" viewBox="0 0 16 16"><path d="M1.8 14.2 L14.2 1.8" stroke="#f0443c" stroke-width="1"/></svg>
<div style="left:940px;top:214px;width:16px;height:16px;background:#000000;"></div>
<div style="left:940px;top:231px;width:16px;height:16px;background:#1a1a1a;"></div>
<div style="left:940px;top:248px;width:16px;height:16px;background:#333333;"></div>
<div style="left:940px;top:265px;width:16px;height:16px;background:#4d4d4d;"></div>
<div style="left:940px;top:282px;width:16px;height:16px;background:#666666;"></div>
<div style="left:940px;top:299px;width:16px;height:16px;background:#868686;"></div>
<div style="left:940px;top:316px;width:16px;height:16px;background:#9c9c9c;"></div>
<div style="left:940px;top:333px;width:16px;height:16px;background:#b3b3b3;"></div>
<div style="left:940px;top:350px;width:16px;height:16px;background:#cccccc;"></div>
<div style="left:940px;top:367px;width:16px;height:16px;background:#e6e6e6;"></div>
<div style="left:940px;top:384px;width:16px;height:16px;background:#ffffff;"></div>
<div style="left:940px;top:401px;width:16px;height:16px;background:#0000ff;"></div>
<div style="left:940px;top:418px;width:16px;height:16px;background:#00ffff;"></div>
<div style="left:940px;top:435px;width:16px;height:16px;background:#00ff00;"></div>
<div style="left:940px;top:452px;width:16px;height:16px;background:#ffff00;"></div>
<div style="left:940px;top:469px;width:16px;height:16px;background:#ff0000;"></div>
<div style="left:940px;top:486px;width:16px;height:16px;background:#ff00ff;"></div>
<div style="left:940px;top:503px;width:16px;height:16px;background:#9900cc;"></div>
<div style="left:940px;top:520px;width:16px;height:16px;background:#ff6600;"></div>
<div style="left:940px;top:537px;width:16px;height:16px;background:#ff99cc;"></div>
<div style="left:940px;top:554px;width:16px;height:16px;background:#663333;"></div>
<div style="left:940px;top:571px;width:16px;height:16px;background:#ccccff;"></div>
<div style="left:940px;top:588px;width:16px;height:3px;background:#9999ff;"></div>
<svg style="left:942px;top:594px;" width="12" height="8" viewBox="0 0 12 8"><path d="M1 1.4 L6 6.4 L11 1.4" fill="none" stroke="#aab0bc" stroke-width="1.5"/></svg>
<svg style="left:943px;top:613px;" width="10" height="9" viewBox="0 0 10 9"><path d="M1 1 L4.4 4.5 L1 8 M5.2 1 L8.6 4.5 L5.2 8" fill="none" stroke="#aeb6c6" stroke-width="1.1"/></svg>
<div style="left:662px;top:219px;width:6px;height:314px;background:#bfbfbf;"></div>
<div style="left:325px;top:528px;width:343px;height:5px;background:#bfbfbf;"></div>
<div style="left:319px;top:214px;width:343px;height:314px;background:#fff;border:1px solid #c9c9c9;"></div>
<div style="left:320px;top:215px;width:123px;height:214px;background:#e6e6e6;"></div>
<div style="left:320px;top:429px;width:341px;height:1px;background:#e4e4e4;"></div>
<span class="t" style="left:328px;top:222px;font-size:9px;line-height:12px;color:#6b6870;font-family:'Liberation Serif','Noto Serif CJK SC',serif;letter-spacing:-0.1px;">立即试用</span>
<svg style="left:319px;top:214px;" width="349" height="319" viewBox="319 214 349 319"><defs><linearGradient id="g0c" x1="0" y1="0" x2="1" y2="0.35"><stop offset="0" stop-color="#d4dff0"/><stop offset="0.5" stop-color="#cbd8eb"/><stop offset="1" stop-color="#c2d0e7"/></linearGradient><linearGradient id="g0b" x1="0" y1="0" x2="1" y2="0.5"><stop offset="0" stop-color="#d3deee"/><stop offset="0.6" stop-color="#cbd8eb"/><stop offset="1" stop-color="#c2d0e6"/></linearGradient><linearGradient id="g1c" x1="0" y1="0" x2="1" y2="0.35"><stop offset="0" stop-color="#d8dfec"/><stop offset="0.5" stop-color="#cdd6e5"/><stop offset="1" stop-color="#c3cde0"/></linearGradient><linearGradient id="g1b" x1="0" y1="0" x2="1" y2="0.5"><stop offset="0" stop-color="#d8dfec"/><stop offset="0.6" stop-color="#cfd8e7"/><stop offset="1" stop-color="#c6d0e2"/></linearGradient></defs><rect x="327.5" y="239.5" width="102.5" height="180" fill="none" stroke="#1e1e1e" stroke-width="1" stroke-dasharray="3.2 2.6"/><rect x="327.5" y="257.6" width="100.0" height="1.4" fill="#3a3a3a"/><rect x="327.5" y="262.3" width="100.0" height="1.4" fill="#3a3a3a"/><rect x="327.5" y="271.3" width="100.0" height="1.4" fill="#3a3a3a"/><rect x="327.5" y="275.7" width="9.0" height="1.4" fill="#3a3a3a"/><rect x="336" y="284.9" width="4.5" height="1.2" fill="#3a3a3a"/><rect x="343" y="284.8" width="86.5" height="1.4" fill="#3a3a3a"/><rect x="343" y="289.6" width="77.0" height="1.4" fill="#3a3a3a"/><rect x="336" y="294.4" width="4.5" height="1.2" fill="#3a3a3a"/><rect x="343" y="294.3" width="45.0" height="1.4" fill="#3a3a3a"/><rect x="336" y="299.4" width="4.5" height="1.2" fill="#3a3a3a"/><rect x="343" y="299.3" width="87.0" height="1.4" fill="#3a3a3a"/><rect x="343" y="304.1" width="18.0" height="1.4" fill="#3a3a3a"/><rect x="336" y="308.6" width="4.5" height="1.2" fill="#3a3a3a"/><rect x="343" y="308.5" width="86.5" height="1.4" fill="#3a3a3a"/><rect x="343" y="313.1" width="4.0" height="1.4" fill="#3a3a3a"/><rect x="327.5" y="355.7" width="82.0" height="1.4" fill="#3a3a3a"/><rect x="327.5" y="364.8" width="95.5" height="1.4" fill="#3a3a3a"/><rect x="327.5" y="239.5" width="12.5" height="12.5" fill="#fff" stroke="#c4c4c4" stroke-width="0.8"/><path d="M333.7 240.6 L335.9 245.0 L335.1 247.7 L332.3 247.7 L331.5 245.0 Z" fill="#fff" stroke="#222" stroke-width="0.7"/><path d="M333.7 241.3 L333.7 245.4" stroke="#222" stroke-width="0.6"/><path d="M332.3 248.1 L335.1 248.1 L335.1 250.3 L332.3 250.3 Z" fill="#fff" stroke="#222" stroke-width="0.7"/><rect x="327.5" y="341.5" width="12.5" height="12.5" fill="#fff" stroke="#c4c4c4" stroke-width="0.8"/><path d="M331.7 343.2 C330.2 346.2 330.5 349.8 332.9 352.5" fill="none" stroke="#222" stroke-width="0.7"/><path d="M330.1 345.5 L332.0 345.5 L332.0 347.7 L330.1 347.7 Z" fill="#fff" stroke="#222" stroke-width="0.6"/><path d="M334.3 349.0 L338.4 350.1 L336.5 352.4 Z" fill="#222"/><text x="342.3" y="243.8" font-family='"Noto Sans CJK SC",sans-serif' font-size='5' fill='#979797' textLength="20" lengthAdjust="spacingAndGlyphs">绘制线条</text><text x="342.3" y="249.2" font-family='"Noto Sans CJK SC",sans-serif' font-size='5' fill='#979797' textLength="20" lengthAdjust="spacingAndGlyphs">钢笔工具</text><text x="342.3" y="343.2" font-family='"Noto Sans CJK SC",sans-serif' font-size='5' fill='#979797' textLength="25.5" lengthAdjust="spacingAndGlyphs">对曲线造形</text><text x="342.3" y="348.6" font-family='"Noto Sans CJK SC",sans-serif' font-size='5' fill='#979797' textLength="20" lengthAdjust="spacingAndGlyphs">形状工具</text><path d="M 494.6 326.2 C 496.6 315.0 501.0 300.0 506.2 289.6 C 511.5 278.5 522.0 268.5 532.6 263.0 C 544.0 257.3 556.0 255.3 566.6 254.3 L 568.0 252.4 Q 573.0 250.4 578.8 252.6 L 579.8 255.0 C 590.0 258.6 600.0 265.5 606.0 268.3 C 612.0 273.5 621.5 284.5 626.0 293.0 C 629.5 300.0 631.6 315.0 631.7 326.0 C 631.8 333.0 631.4 338.0 631.0 342.6 L 628.4 356.7 L 600.0 348.4 L 598.0 353.0 C 570.0 344.0 530.0 328.0 496.0 329.0 Z" fill="url(#g0c)"/><path d="M 506.0 290.0 C 513.0 277.0 524.0 268.0 536.0 263.0 C 545.0 259.5 553.0 258.0 560.0 257.5 C 548.0 268.0 540.0 285.0 534.0 303.0 C 531.0 311.0 529.0 317.0 527.5 321.0 C 516.0 320.6 505.0 322.0 497.0 325.0 C 499.0 312.0 502.0 300.0 506.0 290.0 Z" fill="#dbe5f3" opacity="0.75"/><path d="M 601.0 290.0 C 600.6 300.0 599.0 318.0 596.0 345.0 L 628.0 355.6 L 630.6 342.0 C 631.6 330.0 631.6 316.0 629.6 304.0 C 627.0 292.0 620.0 281.0 612.0 274.0 C 606.0 270.0 600.0 266.0 592.0 262.0 C 597.0 271.0 601.0 280.0 601.0 290.0 Z" fill="#b9c8e1" opacity="0.4"/><path d="M 494.6 326.2 L 483.0 337.2 L 469.8 351.2 Q 463.0 357.0 463.8 360.4 Q 464.2 363.6 466.6 363.4 C 468.0 357.0 476.0 349.6 483.0 348.3 C 488.0 347.4 492.0 347.8 496.3 349.1 C 502.0 350.9 507.0 353.0 512.8 356.2 C 518.0 359.0 524.0 364.0 529.3 367.8 C 534.0 370.8 538.0 372.6 542.6 374.0 C 547.0 375.4 551.0 376.4 555.8 376.4 C 561.0 376.4 567.0 374.4 572.3 371.0 C 577.0 368.0 582.0 365.5 587.2 361.2 C 592.0 357.0 596.5 353.0 599.8 348.6 C 570.0 338.0 530.0 322.0 494.6 326.2 Z" fill="url(#g0b)"/><path d="M 466.6 363.4 L 472.0 358.4 L 482.4 349.6 L 483.4 348.3 C 476.0 349.6 468.0 356.5 465.0 361.4 Z" fill="#8e99a8"/><path d="M 467.4 362.4 L 472.4 357.8 L 482.6 349.2" fill="none" stroke="#e8edf4" stroke-width="1.4"/><path d="M 567.6 254.6 L 568.2 252.4 Q 573.0 250.2 578.8 252.6 L 579.6 255.0 Z" fill="#c2d0e6"/><path d="M 569.8 255.2 C 564.0 256.4 559.5 258.6 555.8 261.5 C 550.5 265.8 546.0 270.5 542.6 276.4 C 538.5 284.0 535.5 292.5 532.6 301.2 C 530.5 307.5 528.6 313.5 526.9 320.0" fill="none" stroke="#7d7d80" stroke-width="0.7"/><path d="M 579.4 255.0 C 582.0 257.0 584.5 259.0 586.3 260.8 C 590.0 265.5 593.0 271.0 595.4 276.5 C 597.4 281.0 599.2 285.5 600.3 289.8 C 600.0 296.5 599.0 303.0 597.9 309.6 C 597.0 318.0 596.2 326.0 595.4 334.4 L 594.2 345.2" fill="none" stroke="#7d7d80" stroke-width="0.7" stroke-dasharray='3 0.8'/><ellipse cx="612.2" cy="332.7" rx="1.8" ry="2.4" fill="#938d86"/><ellipse cx="612.2" cy="332.9" rx="0.7" ry="1.1" fill="#b9b1a4"/><ellipse cx="625.0" cy="337.7" rx="1.8" ry="2.4" fill="#938d86"/><ellipse cx="625.0" cy="337.9" rx="0.7" ry="1.1" fill="#b9b1a4"/><path d="M 494.6 326.2 L 483.0 337.2 L 469.8 351.2 Q 463.0 357.0 463.8 360.4 Q 464.2 363.6 466.6 363.4" fill="none" stroke="#2e3238" stroke-width="1.0"/><path d="M 465.0 361.4 C 468.0 356.5 476.0 349.6 483.0 348.3 C 488.0 347.4 492.0 347.8 496.3 349.1 C 502.0 350.9 507.0 353.0 512.8 356.2 C 518.0 359.0 524.0 364.0 529.3 367.8 C 534.0 370.8 538.0 372.6 542.6 374.0 C 547.0 375.4 551.0 376.4 555.8 376.4 C 561.0 376.4 567.0 374.4 572.3 371.0 C 577.0 368.0 582.0 365.5 587.2 361.2 C 592.0 357.0 596.5 353.0 599.8 348.6" fill="none" stroke="#2e3238" stroke-width="1.05"/><path d="M 481.4 341.0 C 485.0 339.6 489.0 339.4 493.0 339.7 C 498.0 340.2 502.0 341.0 506.2 342.6 C 512.0 344.8 517.0 347.2 522.7 350.4 C 528.0 353.4 534.0 356.8 539.3 359.5 C 544.0 361.8 548.0 363.6 552.5 364.1 C 557.0 364.6 561.5 364.8 565.7 363.6 C 570.0 362.2 574.0 360.4 577.3 357.9 C 581.0 355.0 584.0 352.0 586.4 348.3" fill="none" stroke="#2e3238" stroke-width="1.0"/><rect x="324.5" y="434.5" width="16" height="16" fill="#fff" stroke="#a9a9a9" stroke-width="1"/><path d="M332.5 436.0 L335.5 441.8 L334.3 445.4 L330.7 445.4 L329.5 441.8 Z" fill="#fff" stroke="#222" stroke-width="0.8"/><path d="M332.5 436.9 L332.5 442.3" stroke="#222" stroke-width="0.7"/><path d="M330.7 445.9 L334.3 445.9 L334.3 448.8 L330.7 448.8 Z" fill="#fff" stroke="#222" stroke-width="0.8"/><rect x="453.5" y="433.5" width="16" height="16" fill="#fff" stroke="#a9a9a9" stroke-width="1"/><path d="M458.7 435.7 C456.8 439.7 457.1 444.5 460.3 448.0" fill="none" stroke="#222" stroke-width="0.8"/><path d="M456.7 438.8 L459.2 438.8 L459.2 441.6 L456.7 441.6 Z" fill="#fff" stroke="#222" stroke-width="0.7"/><path d="M462.3 443.4 L467.7 444.8 L465.1 447.9 Z" fill="#222"/><path d="M 345.4 488.6 C 346.4 482.7 348.6 474.8 351.3 469.3 C 354.0 463.5 359.5 458.2 365.1 455.3 C 371.1 452.3 377.5 451.3 383.1 450.8 L 383.8 449.8 Q 386.5 448.7 389.6 449.9 L 390.1 451.1 C 395.6 453.0 400.9 456.7 404.1 458.1 C 407.4 460.9 412.5 466.6 415.0 471.1 C 416.9 474.8 418.1 482.7 418.3 488.5 C 418.4 492.2 418.2 494.8 418.0 497.2 L 416.8 504.6 L 401.6 500.3 L 400.6 502.7 C 385.6 497.9 364.2 489.5 346.2 490.1 Z" fill="url(#g1c)"/><path d="M 351.2 469.5 C 354.8 462.7 360.5 458.0 366.9 455.3 C 371.6 453.5 375.9 452.7 379.6 452.4 C 373.3 458.0 369.2 466.9 366.1 476.4 C 364.6 480.6 363.6 483.7 362.8 485.8 C 356.7 485.6 350.9 486.4 346.7 488.0 C 347.6 481.1 349.1 474.8 351.2 469.5 Z" fill="#dbe5f3" opacity="0.5"/><path d="M 401.7 469.5 C 401.5 474.8 400.8 484.3 399.4 498.5 L 416.5 504.0 L 417.8 496.9 C 418.2 490.6 418.1 483.2 417.0 476.9 C 415.5 470.6 411.7 464.8 407.4 461.1 C 404.2 459.0 400.9 456.9 396.6 454.8 C 399.4 459.5 401.6 464.3 401.7 469.5 Z" fill="#b9c8e1" opacity="0.25"/><path d="M 345.4 488.6 L 339.3 494.4 L 332.4 501.7 Q 328.8 504.8 329.3 506.6 Q 329.5 508.3 330.8 508.1 C 331.5 504.8 335.7 500.9 339.4 500.2 C 342.0 499.7 344.2 499.9 346.5 500.6 C 349.5 501.6 352.2 502.7 355.3 504.4 C 358.1 505.8 361.3 508.5 364.2 510.5 C 366.7 512.0 368.8 513.0 371.3 513.7 C 373.6 514.5 375.8 515.0 378.3 515.0 C 381.1 515.0 384.3 513.9 387.0 512.1 C 389.5 510.6 392.2 509.3 394.9 507.0 C 397.4 504.8 399.8 502.7 401.5 500.4 C 385.6 494.8 364.2 486.4 345.4 488.6 Z" fill="url(#g1b)"/><path d="M 330.8 508.1 L 333.6 505.5 L 339.1 500.9 L 339.6 500.2 C 335.7 500.9 331.5 504.5 329.9 507.1 Z" fill="#8e99a8"/><path d="M 331.2 507.6 L 333.8 505.2 L 339.2 500.7" fill="none" stroke="#e8edf4" stroke-width="0.9"/><path d="M 383.6 450.9 L 383.9 449.8 Q 386.5 448.6 389.6 449.9 L 390.0 451.1 Z" fill="#c2d0e6"/><path d="M 384.8 451.2 C 381.7 451.9 379.3 453.0 377.4 454.5 C 374.6 456.8 372.3 459.3 370.5 462.4 C 368.4 466.4 366.9 470.9 365.4 475.4 C 364.3 478.7 363.4 481.9 362.5 485.3" fill="none" stroke="#7d7d80" stroke-width="0.6"/><path d="M 389.9 451.1 C 391.3 452.2 392.6 453.2 393.6 454.2 C 395.6 456.7 397.3 459.5 398.6 462.4 C 399.7 464.8 400.7 467.2 401.3 469.4 C 401.2 473.0 400.7 476.4 400.2 479.8 C 399.8 484.3 399.4 488.5 399.0 492.9 L 398.5 498.6" fill="none" stroke="#7d7d80" stroke-width="0.6" /><ellipse cx="408.0" cy="492.0" rx="1" ry="1.4" fill="#a49e98"/><ellipse cx="414.8" cy="494.6" rx="1" ry="1.4" fill="#a49e98"/><path d="M 345.4 488.6 L 339.3 494.4 L 332.4 501.7 Q 328.8 504.8 329.3 506.6 Q 329.5 508.3 330.8 508.1" fill="none" stroke="#4a4a4c" stroke-width="0.9"/><path d="M 329.9 507.1 C 331.5 504.5 335.7 500.9 339.4 500.2 C 342.0 499.7 344.2 499.9 346.5 500.6 C 349.5 501.6 352.2 502.7 355.3 504.4 C 358.1 505.8 361.3 508.5 364.2 510.5 C 366.7 512.0 368.8 513.0 371.3 513.7 C 373.6 514.5 375.8 515.0 378.3 515.0 C 381.1 515.0 384.3 513.9 387.0 512.1 C 389.5 510.6 392.2 509.3 394.9 507.0 C 397.4 504.8 399.8 502.7 401.5 500.4" fill="none" stroke="#4a4a4c" stroke-width="0.9"/><path d="M 338.5 496.4 C 340.4 495.6 342.5 495.5 344.6 495.7 C 347.3 495.9 349.4 496.4 351.7 497.2 C 354.8 498.4 357.5 499.6 360.5 501.3 C 363.4 502.9 366.6 504.7 369.4 506.1 C 371.9 507.3 374.1 508.3 376.5 508.5 C 378.9 508.8 381.3 508.9 383.5 508.3 C 385.8 507.5 387.9 506.6 389.6 505.3 C 391.5 503.7 393.1 502.2 394.4 500.2" fill="none" stroke="#4a4a4c" stroke-width="0.8"/><path d="M 345.4 488.6 C 346.4 482.7 348.6 474.8 351.3 469.3 C 354.0 463.5 359.5 458.2 365.1 455.3 C 371.1 452.3 377.5 451.3 383.1 450.8 L 383.8 449.8" fill="none" stroke="#161616" stroke-width="1.1"/><path d="M 345.4 488.6 C 348.2 486.6 352.5 486.1 356.7 486.5 C 369.5 488.2 390.9 496.4 416.8 504.6" fill="none" stroke="#161616" stroke-width="1.2"/><path d="M 458.2 489.8 C 459.3 483.9 461.6 476.0 464.4 470.5 C 467.2 464.7 472.8 459.4 478.4 456.5 C 484.5 453.5 490.9 452.5 496.5 452.0 L 497.2 451.0 Q 499.9 449.9 503.0 451.1 L 503.5 452.3 C 508.9 454.2 514.3 457.9 517.4 459.3 C 520.6 462.1 525.7 467.8 528.1 472.3 C 529.9 476.0 531.1 483.9 531.1 489.7 C 531.2 493.4 531.0 496.0 530.7 498.4 L 529.4 505.8 L 514.3 501.5 L 513.2 503.9 C 498.3 499.1 477.0 490.7 459.0 491.3 Z" fill="url(#g1c)"/><path d="M 464.3 470.7 C 468.0 463.9 473.9 459.2 480.2 456.5 C 485.0 454.7 489.3 453.9 493.0 453.6 C 486.6 459.2 482.4 468.1 479.2 477.6 C 477.6 481.8 476.5 484.9 475.7 487.0 C 469.6 486.8 463.8 487.6 459.5 489.1 C 460.6 482.3 462.2 476.0 464.3 470.7 Z" fill="#dbe5f3" opacity="0.5"/><path d="M 514.8 470.7 C 514.6 476.0 513.7 485.5 512.1 499.7 L 529.1 505.2 L 530.5 498.1 C 531.1 491.8 531.1 484.4 530.0 478.1 C 528.6 471.8 524.9 466.0 520.6 462.3 C 517.4 460.2 514.3 458.1 510.0 456.0 C 512.7 460.7 514.8 465.5 514.8 470.7 Z" fill="#b9c8e1" opacity="0.25"/><path d="M 458.2 489.8 L 452.1 495.6 L 445.0 502.9 Q 441.4 506.0 441.9 507.8 Q 442.1 509.5 443.3 509.3 C 444.1 506.0 448.3 502.1 452.1 501.4 C 454.7 500.9 456.8 501.1 459.1 501.8 C 462.2 502.8 464.8 503.9 467.9 505.6 C 470.7 507.0 473.9 509.7 476.7 511.7 C 479.2 513.2 481.3 514.2 483.7 514.9 C 486.1 515.7 488.2 516.2 490.8 516.2 C 493.5 516.2 496.7 515.1 499.5 513.3 C 502.0 511.8 504.7 510.5 507.5 508.2 C 510.0 506.0 512.4 503.9 514.2 501.6 C 498.3 496.0 477.0 487.6 458.2 489.8 Z" fill="url(#g1b)"/><path d="M 443.3 509.3 L 446.2 506.7 L 451.7 502.1 L 452.3 501.4 C 448.3 502.1 444.1 505.7 442.5 508.3 Z" fill="#8e99a8"/><path d="M 443.8 508.8 L 446.4 506.4 L 451.9 501.9" fill="none" stroke="#e8edf4" stroke-width="0.9"/><path d="M 497.0 452.1 L 497.4 451.0 Q 499.9 449.8 503.0 451.1 L 503.4 452.3 Z" fill="#c2d0e6"/><path d="M 498.2 452.4 C 495.1 453.1 492.7 454.2 490.8 455.7 C 487.9 458.0 485.6 460.5 483.7 463.6 C 481.6 467.6 480.0 472.1 478.4 476.6 C 477.3 479.9 476.3 483.1 475.4 486.5" fill="none" stroke="#7d7d80" stroke-width="0.6"/><path d="M 503.3 452.3 C 504.7 453.4 506.0 454.4 507.0 455.4 C 508.9 457.9 510.5 460.7 511.8 463.6 C 512.9 466.0 513.8 468.4 514.4 470.6 C 514.3 474.2 513.7 477.6 513.1 481.0 C 512.7 485.5 512.2 489.7 511.8 494.1 L 511.2 499.8" fill="none" stroke="#7d7d80" stroke-width="0.6" /><ellipse cx="520.7" cy="493.2" rx="1.2" ry="1.7" fill="#4a4a4c"/><ellipse cx="527.5" cy="495.8" rx="1.2" ry="1.7" fill="#4a4a4c"/><path d="M 458.2 489.8 L 452.1 495.6 L 445.0 502.9 Q 441.4 506.0 441.9 507.8 Q 442.1 509.5 443.3 509.3" fill="none" stroke="#4a4a4c" stroke-width="0.9"/><path d="M 442.5 508.3 C 444.1 505.7 448.3 502.1 452.1 501.4 C 454.7 500.9 456.8 501.1 459.1 501.8 C 462.2 502.8 464.8 503.9 467.9 505.6 C 470.7 507.0 473.9 509.7 476.7 511.7 C 479.2 513.2 481.3 514.2 483.7 514.9 C 486.1 515.7 488.2 516.2 490.8 516.2 C 493.5 516.2 496.7 515.1 499.5 513.3 C 502.0 511.8 504.7 510.5 507.5 508.2 C 510.0 506.0 512.4 503.9 514.2 501.6" fill="none" stroke="#4a4a4c" stroke-width="0.9"/><path d="M 451.2 497.6 C 453.1 496.8 455.3 496.7 457.4 496.9 C 460.0 497.1 462.2 497.6 464.4 498.4 C 467.5 499.6 470.1 500.8 473.2 502.5 C 476.0 504.1 479.2 505.9 482.0 507.3 C 484.5 508.5 486.6 509.5 489.0 509.7 C 491.4 510.0 493.8 510.1 496.0 509.5 C 498.3 508.7 500.4 507.8 502.2 506.5 C 504.2 504.9 505.8 503.4 507.0 501.4" fill="none" stroke="#4a4a4c" stroke-width="0.8"/><path d="M 458.2 489.8 C 459.3 483.9 461.6 476.0 464.4 470.5 C 467.2 464.7 472.8 459.4 478.4 456.5 C 484.5 453.5 490.9 452.5 496.5 452.0 L 497.2 451.0 L499.6 450.6 L503.5 452.3" fill="none" stroke="#2090ff" stroke-width="1.3"/><path d="M 503.5 452.3 C 508.9 454.2 514.3 457.9 517.4 459.3 C 520.6 462.1 525.7 467.8 528.1 472.3 C 529.9 476.0 531.1 483.9 531.1 489.7 C 531.2 493.4 531.0 496.0 530.7 498.4 L 529.4 505.8" fill="none" stroke="#2090ff" stroke-width="1.3"/><path d="M 458.2 489.8 C 461.1 487.8 465.4 487.3 469.6 487.7 C 482.4 489.4 503.6 497.6 529.4 505.8" fill="none" stroke="#2090ff" stroke-width="1.4"/><ellipse cx="499.9" cy="450.4" rx="2.6" ry="0.9" fill="#77797c"/><path d="M 576.1 490.8 C 577.2 484.9 579.5 477.0 582.3 471.5 C 585.1 465.7 590.7 460.4 596.3 457.5 C 602.4 454.5 608.8 453.5 614.4 453.0 L 615.1 452.0 Q 617.8 450.9 620.9 452.1 L 621.4 453.3 C 626.8 455.2 632.2 458.9 635.3 460.3 C 638.5 463.1 643.6 468.8 646.0 473.3 C 647.8 477.0 649.0 484.9 649.0 490.7 C 649.1 494.4 648.9 497.0 648.6 499.4 L 647.3 506.8 L 632.2 502.5 L 631.1 504.9 C 616.2 500.1 594.9 491.7 576.9 492.3 Z" fill="#fff"/><path d="M 576.1 490.8 L 570.0 496.6 L 562.9 503.9 Q 559.3 507.0 559.8 508.8 Q 560.0 510.5 561.2 510.3 C 562.0 507.0 566.2 503.1 570.0 502.4 C 572.6 501.9 574.7 502.1 577.0 502.8 C 580.1 503.8 582.7 504.9 585.8 506.6 C 588.6 508.0 591.8 510.7 594.6 512.7 C 597.1 514.2 599.2 515.2 601.6 515.9 C 604.0 516.7 606.1 517.2 608.7 517.2 C 611.4 517.2 614.6 516.1 617.4 514.3 C 619.9 512.8 622.6 511.5 625.4 509.2 C 627.9 507.0 630.3 504.9 632.1 502.6 C 616.2 497.0 594.9 488.6 576.1 490.8 Z" fill="#fff"/><path d="M 616.1 453.4 C 613.0 454.1 610.6 455.2 608.7 456.7 C 605.8 459.0 603.5 461.5 601.6 464.6 C 599.5 468.6 597.9 473.1 596.3 477.6 C 595.2 480.9 594.2 484.1 593.3 487.5" fill="none" stroke="#c8c8c8" stroke-width="0.6"/><path d="M 621.2 453.3 C 622.6 454.4 623.9 455.4 624.9 456.4 C 626.8 458.9 628.4 461.7 629.7 464.6 C 630.8 467.0 631.7 469.4 632.3 471.6 C 632.2 475.2 631.6 478.6 631.0 482.0 C 630.6 486.5 630.1 490.7 629.7 495.1 L 629.1 500.8" fill="none" stroke="#c8c8c8" stroke-width="0.6" /><ellipse cx="638.6" cy="494.2" rx="1.2" ry="1.7" fill="#4a4a4c"/><ellipse cx="645.5" cy="496.8" rx="1.2" ry="1.7" fill="#4a4a4c"/><path d="M 576.1 490.8 L 570.0 496.6 L 562.9 503.9 Q 559.3 507.0 559.8 508.8 Q 560.0 510.5 561.2 510.3" fill="none" stroke="#4a4a4c" stroke-width="0.9"/><path d="M 560.4 509.3 C 562.0 506.7 566.2 503.1 570.0 502.4 C 572.6 501.9 574.7 502.1 577.0 502.8 C 580.1 503.8 582.7 504.9 585.8 506.6 C 588.6 508.0 591.8 510.7 594.6 512.7 C 597.1 514.2 599.2 515.2 601.6 515.9 C 604.0 516.7 606.1 517.2 608.7 517.2 C 611.4 517.2 614.6 516.1 617.4 514.3 C 619.9 512.8 622.6 511.5 625.4 509.2 C 627.9 507.0 630.3 504.9 632.1 502.6" fill="none" stroke="#4a4a4c" stroke-width="0.9"/><path d="M 569.1 498.6 C 571.0 497.8 573.2 497.7 575.3 497.9 C 577.9 498.1 580.1 498.6 582.3 499.4 C 585.4 500.6 588.0 501.8 591.1 503.5 C 593.9 505.1 597.1 506.9 599.9 508.3 C 602.4 509.5 604.5 510.5 606.9 510.7 C 609.3 511.0 611.7 511.1 613.9 510.5 C 616.2 509.7 618.3 508.8 620.1 507.5 C 622.1 505.9 623.7 504.4 624.9 502.4" fill="none" stroke="#4a4a4c" stroke-width="0.8"/><path d="M 576.1 490.8 C 577.2 484.9 579.5 477.0 582.3 471.5 C 585.1 465.7 590.7 460.4 596.3 457.5 C 602.4 454.5 608.8 453.5 614.4 453.0 L 615.1 452.0" fill="none" stroke="#3c3c3e" stroke-width="0.9"/><path d="M 621.4 453.3 C 626.8 455.2 632.2 458.9 635.3 460.3 C 638.5 463.1 643.6 468.8 646.0 473.3 C 647.8 477.0 649.0 484.9 649.0 490.7 C 649.1 494.4 648.9 497.0 648.6 499.4 L 647.3 506.8" fill="none" stroke="#3c3c3e" stroke-width="0.9"/><path d="M 576.1 490.8 C 579.0 488.8 583.3 488.3 587.5 488.7 C 600.3 490.4 621.5 498.6 647.3 506.8" fill="none" stroke="#3c3c3e" stroke-width="0.9"/><path d="M 614.9 453.1 L 615.3 452.0 Q 617.8 450.8 620.9 452.1 L 621.3 453.3 Z" fill="#fff" stroke="#3c3c3e" stroke-width="0.8"/><path d="M372.2 448.6 L382.5 450.2 C388 450.4 392.5 450.8 397.3 451.8 C404 453.8 411 457 416.2 461.4" fill="none" stroke="#2090ff" stroke-width="1.2"/><rect x="381.6" y="449.6" width="1.6" height="1.4" fill="#fff"/><path d="M414 456.8 Q419 458 421.8 461.6" fill="none" stroke="#1aa03c" stroke-width="1.1"/><path d="M415.6 463.6 L418.2 464.2 L417 466.6 Z" fill="#1aa03c"/><rect x="345.0" y="487.5" width="1.8" height="1.8" fill="#fff"/><rect x="354.6" y="484.3" width="1.8" height="1.8" fill="#fff"/><rect x="356.70000000000005" y="460.70000000000005" width="1.8" height="1.8" fill="#fff"/><rect x="415.1" y="504.5" width="1.8" height="1.8" fill="#fff"/><path d="M515 455 L536 472.6" fill="none" stroke="#2090ff" stroke-width="1"/><path d="M502 451.4 L510 451.8" fill="none" stroke="#2090ff" stroke-width="1.4"/><path d="M533.6 455.8 L529.6 459.6" fill="none" stroke="#1aa03c" stroke-width="1"/><path d="M527.6 461.4 L528.6 458.2 L530.8 460.4 Z" fill="#1aa03c"/><path d="M524.2 469 L525.4 465.8 L526.8 468.8 Z" fill="#1aa03c"/><rect x="457.5" y="488.3" width="1.8" height="1.8" fill="#fff"/><rect x="495.5" y="451.3" width="1.8" height="1.8" fill="#fff"/><rect x="525.1" y="462.70000000000005" width="1.8" height="1.8" fill="#fff"/><rect x="523.7" y="505.70000000000005" width="1.8" height="1.8" fill="#fff"/></svg>
<div style="left:42px;top:587px;width:896px;height:24px;background:#f4f4f4;border-top:1px solid #dcdcdc;"></div>
<svg style="left:48px;top:593px;" width="11" height="11" viewBox="0 0 11 11"><path d="M5.5 1 V10 M1 5.5 H10" stroke="#262626" stroke-width="1.3"/></svg>
<svg style="left:71px;top:594px;" width="11" height="10" viewBox="0 0 11 10"><path d="M1.4 0.6 V9.4" stroke="#b9b9b9" stroke-width="1.2"/><path d="M9.8 0.6 V9.4 L3 5 Z" fill="#b9b9b9"/></svg>
<svg style="left:96px;top:594px;" width="8" height="10" viewBox="0 0 8 10"><path d="M7.2 0.6 V9.4 L0.6 5 Z" fill="#b9b9b9"/></svg>
<span class="t" style="left:118px;top:591px;font-size:13px;line-height:16px;color:#777;word-spacing:3.4px;"><span style="font-size:12px">1</span> 的 <span style="font-size:12px">1</span></span>
<svg style="left:172px;top:594px;" width="8" height="10" viewBox="0 0 8 10"><path d="M0.8 0.6 V9.4 L7.4 5 Z" fill="#b9b9b9"/></svg>
<svg style="left:194px;top:594px;" width="11" height="10" viewBox="0 0 11 10"><path d="M9.6 0.6 V9.4" stroke="#b9b9b9" stroke-width="1.2"/><path d="M1.2 0.6 V9.4 L8 5 Z" fill="#b9b9b9"/></svg>
<svg style="left:217px;top:593px;" width="11" height="11" viewBox="0 0 11 11"><path d="M5.5 1 V10 M1 5.5 H10" stroke="#262626" stroke-width="1.3"/></svg>
<div style="left:234px;top:588px;width:100px;height:23px;background:#d9d9d9;"></div>
<span class="t" style="left:272px;top:591px;font-size:13px;line-height:16px;color:#111;letter-spacing:0.5px;">页 <span class="lat">1</span></span>
<div style="left:42px;top:611px;width:896px;height:22px;background:#f4f4f4;border-top:1px solid #dcdcdc;"></div>
<svg style="left:44px;top:614px;" width="6" height="17" viewBox="0 0 6 17"><rect x="1" y="1" width="1" height="1" fill="#c4c4c4"/><rect x="3" y="1" width="1" height="1" fill="#c4c4c4"/><rect x="2" y="3" width="1" height="1" fill="#c4c4c4"/><rect x="4" y="3" width="1" height="1" fill="#c4c4c4"/><rect x="1" y="5" width="1" height="1" fill="#c4c4c4"/><rect x="3" y="5" width="1" height="1" fill="#c4c4c4"/><rect x="2" y="7" width="1" height="1" fill="#c4c4c4"/><rect x="4" y="7" width="1" height="1" fill="#c4c4c4"/><rect x="1" y="9" width="1" height="1" fill="#c4c4c4"/><rect x="3" y="9" width="1" height="1" fill="#c4c4c4"/><rect x="2" y="11" width="1" height="1" fill="#c4c4c4"/><rect x="4" y="11" width="1" height="1" fill="#c4c4c4"/><rect x="1" y="13" width="1" height="1" fill="#c4c4c4"/><rect x="3" y="13" width="1" height="1" fill="#c4c4c4"/><rect x="2" y="15" width="1" height="1" fill="#c4c4c4"/><rect x="4" y="15" width="1" height="1" fill="#c4c4c4"/></svg>
<svg style="left:56px;top:618px;" width="7" height="9" viewBox="0 0 7 9"><path d="M0.8 0.6 L5.4 4.4 L0.8 8.2 Z" fill="#666"/></svg>
<svg style="left:72px;top:615px;" width="14" height="14" viewBox="0 0 14 14"><path d="M1.8 12.2 L8.6 5.4" stroke="#333" stroke-width="2.2" stroke-linecap="round"/><path d="M2 12 L4.4 9.6" stroke="#e0701a" stroke-width="1.6" stroke-linecap="round"/><path d="M7.2 3.6 L10.4 6.8" stroke="#222" stroke-width="1.6"/><path d="M9.4 4.6 L11.4 2.6" stroke="#222" stroke-width="3.4" stroke-linecap="round"/></svg>
<svg style="left:93px;top:617px;" width="9" height="12" viewBox="0 0 9 12"><path d="M7.6 1 L1.6 6 L7.6 11" fill="none" stroke="#d4d4d8" stroke-width="1.6"/></svg>
<div style="left:106px;top:613px;width:256px;height:18px;background:#555;"></div>
<div style="left:106px;top:613px;width:18px;height:18px;background:#fff;border:1px solid #4a4a4a;"></div>
<svg style="left:107px;top:614px;" width="16" height="16" viewBox="0 0 16 16"><path d="M1.6 14.4 L14.4 1.6" stroke="#f0443c" stroke-width="1"/></svg>
<div style="left:124px;top:614px;width:16px;height:16px;background:#009688;"></div>
<div style="left:141px;top:614px;width:16px;height:16px;background:#0099cc;"></div>
<div style="left:158px;top:614px;width:16px;height:16px;background:#ffffff;"></div>
<div style="left:175px;top:614px;width:16px;height:16px;background:#000000;"></div>
<div style="left:192px;top:614px;width:16px;height:16px;background:#000000;"></div>
<div style="left:209px;top:614px;width:16px;height:16px;background:#666666;"></div>
<div style="left:226px;top:614px;width:16px;height:16px;background:#009933;"></div>
<div style="left:243px;top:614px;width:16px;height:16px;background:#e6e6e6;"></div>
<div style="left:260px;top:614px;width:16px;height:16px;background:#cccccc;"></div>
<div style="left:277px;top:614px;width:16px;height:16px;background:#0090ff;"></div>
<div style="left:294px;top:614px;width:16px;height:16px;background:#b3b3b3;"></div>
<div style="left:311px;top:614px;width:16px;height:16px;background:#4d4d4d;"></div>
<div style="left:328px;top:614px;width:16px;height:16px;background:#1a1a1a;"></div>
<div style="left:345px;top:614px;width:16px;height:16px;background:#333333;"></div>
<svg style="left:903px;top:616px;" width="10" height="13" viewBox="0 0 10 13"><path d="M1.6 1 L8 6.5 L1.6 12" fill="none" stroke="#d0d0d0" stroke-width="1.6"/></svg>
<svg style="left:917px;top:617px;" width="10" height="9" viewBox="0 0 10 9"><path d="M1 1 L4.4 4.5 L1 8 M5.2 1 L8.6 4.5 L5.2 8" fill="none" stroke="#b4b4b4" stroke-width="1.1"/></svg>
<div style="left:10px;top:632px;width:948px;height:38px;background:#f4f4f4;border-top:1px solid #dcdcdc;"></div>
<svg style="left:20px;top:641px;" width="22" height="22" viewBox="0 0 22 22"><path d="M7.93 4.12 L8.18 2.12 L11.02 2.12 L11.27 4.12 L12.86 4.78 L14.45 3.54 L16.46 5.55 L15.22 7.14 L15.88 8.73 L17.88 8.98 L17.88 11.82 L15.88 12.07 L15.22 13.66 L16.46 15.25 L14.45 17.26 L12.86 16.02 L11.27 16.68 L11.02 18.68 L8.18 18.68 L7.93 16.68 L6.34 16.02 L4.75 17.26 L2.74 15.25 L3.98 13.66 L3.32 12.07 L1.32 11.82 L1.32 8.98 L3.32 8.73 L3.98 7.14 L2.74 5.55 L4.75 3.54 L6.34 4.78 Z M5.3999999999999995 10.4 a4.2 4.2 0 1 0 8.4 0 a4.2 4.2 0 1 0 -8.4 0 Z" fill="#2b2b2b" fill-rule="evenodd" stroke="#2b2b2b" stroke-width="0.8" stroke-linejoin="round"/><path d="M20 16.6 V21 H15.6 Z" fill="#777"/></svg>
<span class="t" style="left:46px;top:643px;font-size:13px;line-height:16px;color:#111;">工具提示</span>
<svg style="left:470px;top:642px;" width="18" height="18" viewBox="0 0 18 18"><path d="M8.6 1.6 L15.6 8.6 L8.6 15.6 L1.6 8.6 Z" fill="#fff" stroke="#2b2b2b" stroke-width="1.5"/><path d="M4.6 9.4 H12.6 L8.6 13.4 Z" fill="#e8201c"/><path d="M17 11.6 V17 H12.2 Z" fill="#e8201c"/></svg>
<div style="left:489px;top:640px;width:22px;height:22px;background:#f8f8f8;border:1px solid #b0b0b0;"></div>
<svg style="left:490px;top:641px;" width="20" height="20" viewBox="0 0 20 20"><path d="M1 19 L19 1" stroke="#e0201c" stroke-width="1.5"/></svg>
<span class="t" style="left:515px;top:643px;font-size:13px;line-height:16px;color:#111;">无</span>
<svg style="left:675px;top:642px;" width="12" height="18" viewBox="0 0 12 18"><path d="M6 1 L9.6 8.2 L8.2 12.4 H3.8 L2.4 8.2 Z" fill="#fff" stroke="#2b2b2b" stroke-width="1"/><path d="M6 2 V8.4" stroke="#2b2b2b" stroke-width="0.9"/><rect x="3.6" y="12.6" width="4.8" height="4.4" fill="#fff" stroke="#2b2b2b" stroke-width="1"/></svg>
<div style="left:688px;top:640px;width:22px;height:22px;background:#231f20;border:1px solid #6a6a6a;"></div>
<span class="t" style="left:714px;top:643px;font-size:11.5px;line-height:16px;color:#111;word-spacing:0.75px;">C:   0 M:   0 Y:   0 K:   100</span>
<div style="left:920px;top:639px;width:1px;height:24px;background:#d2d2d2;"></div>
<svg style="left:930px;top:642px;" width="18" height="18" viewBox="0 0 18 18"><rect x="1.2" y="1.2" width="15.6" height="12" fill="#ee2a24" stroke="#222" stroke-width="1"/><rect x="1.8" y="7.4" width="14.4" height="5.2" fill="#1ea0e6"/><ellipse cx="9" cy="7.4" rx="3.4" ry="2.6" fill="#fff"/><circle cx="9" cy="7.4" r="1.3" fill="#222"/><path d="M9 13.4 V15.6 M4.6 16 H13.4" stroke="#222" stroke-width="1.3"/></svg>
</div></body></html>
